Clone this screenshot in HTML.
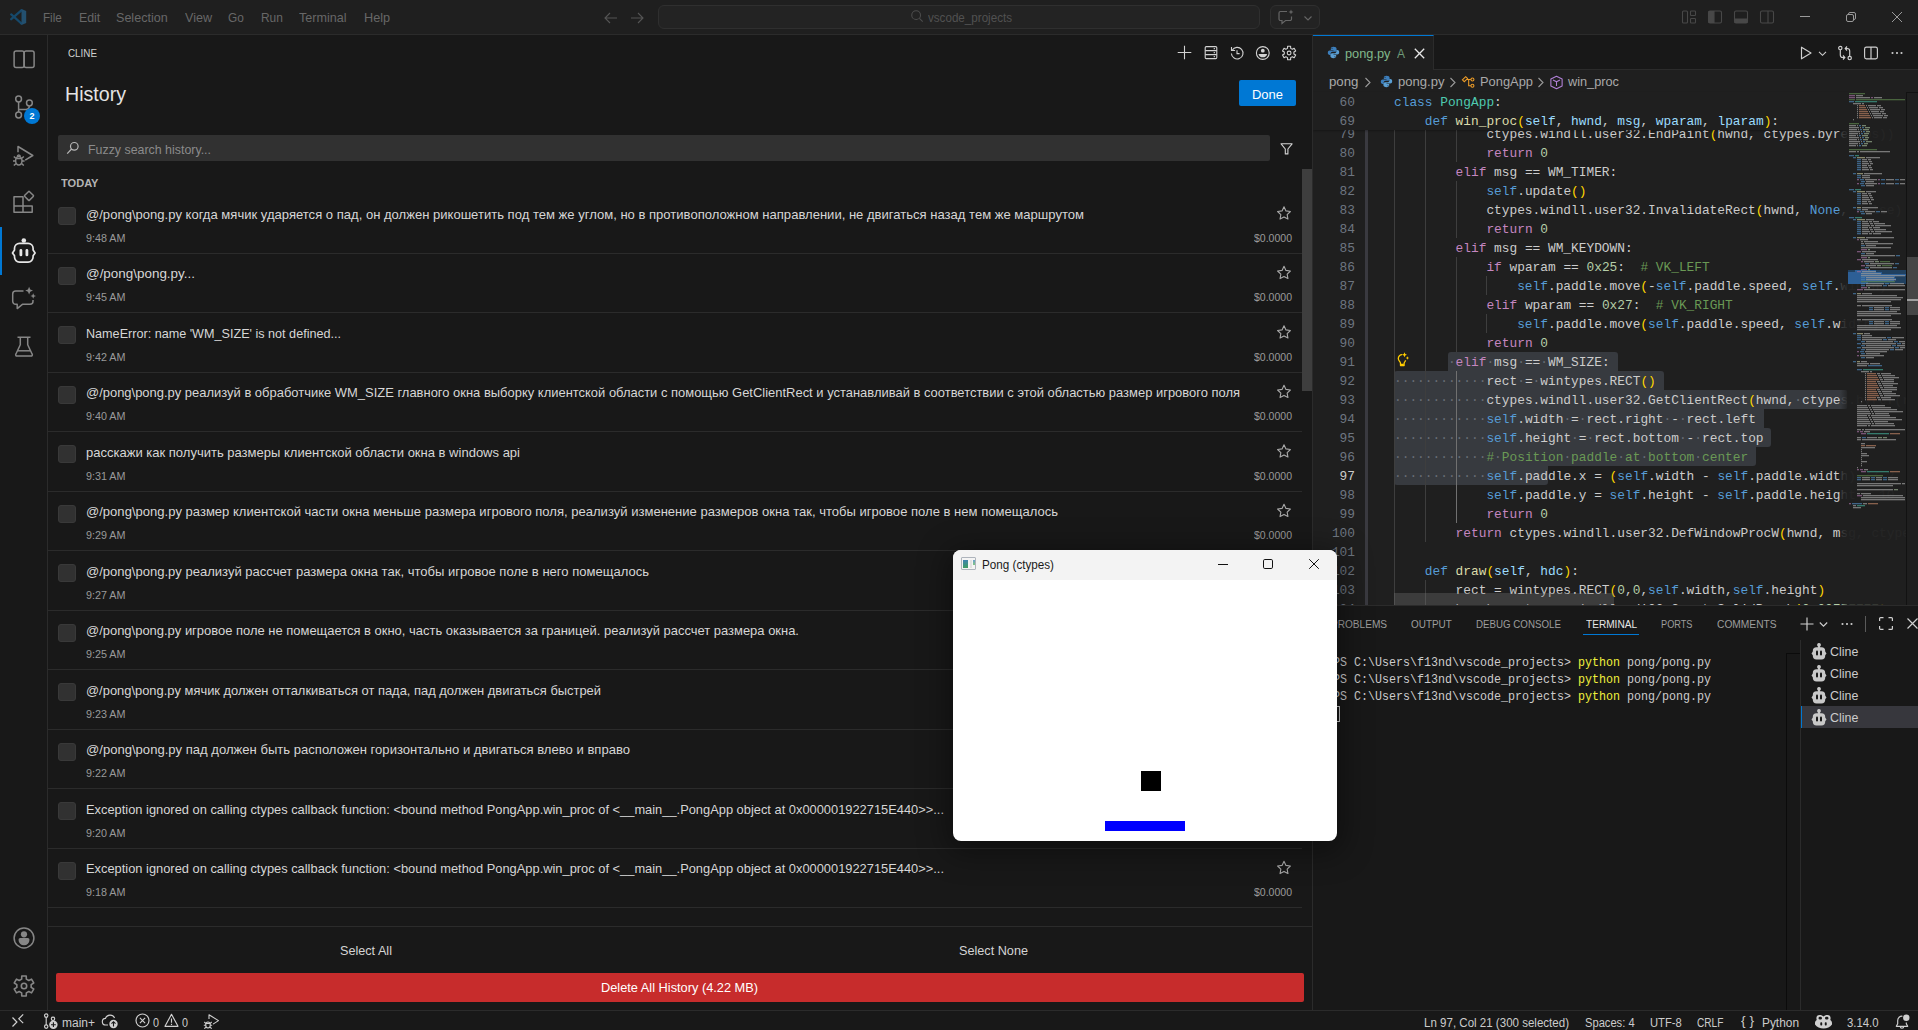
<!DOCTYPE html>
<html>
<head>
<meta charset="utf-8">
<title>pong.py - vscode_projects</title>
<style>
*{box-sizing:border-box;margin:0;padding:0}
html,body{width:1918px;height:1030px;overflow:hidden;background:#181818}
body{font-family:"Liberation Sans",sans-serif;font-size:13px;color:#cccccc;position:relative}
.abs{position:absolute}
svg{display:block;overflow:visible;position:absolute}
.fx{display:inline-block;transform-origin:0 50%;white-space:pre}

/* ---------- title bar ---------- */
#titlebar{left:0;top:0;width:1918px;height:35px;background:#1f1f1f;border-bottom:1px solid #2b2b2b}
.menu{top:1px;height:34px;line-height:34px;font-size:13px;color:#676767;white-space:nowrap}
#cmdcenter{left:658px;top:5px;width:602px;height:24px;border:1px solid #2f2f2f;border-radius:6px;background:#232323}
#cmdtxt{top:.700px;height:22px;line-height:22px;color:#515151;font-size:12px;white-space:nowrap}
#chatbox{left:1270px;top:5px;width:50px;height:24px;border:1px solid #2f2f2f;border-radius:6px;background:#232323}

/* ---------- activity bar ---------- */
#actbar{left:0;top:35px;width:48px;height:975px;background:#181818;border-right:1px solid #2b2b2b}

/* ---------- sidebar (Cline) ---------- */
#sidebar{left:48px;top:35px;width:1264px;height:975px;background:#181818;overflow:hidden}
.sep{left:0;width:1254px;height:1px;background:#2b2b2b}
.cb{left:10px;width:18px;height:18px;border-radius:3px;background:#313131;border:1px solid #393939}
.it{left:38px;font-size:13px;color:#d6d6d6;white-space:nowrap;height:18px;line-height:18px}
.tm{left:38px;font-size:11px;color:#9a9a9a;white-space:nowrap;height:14px;line-height:14px}
.pr{left:1206px;font-size:10.5px;color:#9a9a9a;white-space:nowrap;height:14px;line-height:14px}

/* ---------- editor ---------- */
#edborder{left:1312px;top:35px;width:1px;height:975px;background:#2b2b2b}
#editor{left:1313px;top:35px;width:605px;height:570px;background:#1f1f1f;overflow:hidden}
#tabs{left:0;top:0;width:605px;height:35px;background:#181818;border-bottom:1px solid #2b2b2b}
#tab{left:0;top:0;width:121px;height:35px;background:#1f1f1f;border-top:1px solid #0078d4;border-right:1px solid #2b2b2b}
.code{left:81px;font-family:"Liberation Mono",monospace;font-size:12.83px;white-space:pre;height:19px;line-height:19px;color:#cccccc}
.ln{left:0;width:42px;text-align:right;font-family:"Liberation Mono",monospace;font-size:12.83px;height:19px;line-height:19px;color:#6e7681;white-space:pre}
.k{color:#569cd6}.c{color:#c586c0}.f{color:#dcdcaa}.t{color:#4ec9b0}.v{color:#9cdcfe}.n{color:#b5cea8}.m{color:#6a9955}.p{color:#ffd700}.w{color:#cccccc}.d{color:#686d75}
.sel{background:#373a3f;height:19px}
.ig{width:1px;background:#3b3b3b}

/* ---------- panel ---------- */
#panel{left:1313px;top:605px;width:605px;height:405px;background:#181818;border-top:1px solid #2b2b2b;overflow:hidden}
.ptab{top:8.100px;height:20px;line-height:20px;font-size:11px;color:#9d9d9d;white-space:nowrap}
.term{font-family:"Liberation Mono",monospace;font-size:12.83px;white-space:pre;height:17px;line-height:17px;color:#cccccc}
.y{color:#f0f03c}

/* ---------- status bar ---------- */
#status{left:0;top:1010px;width:1918px;height:22px;background:#181818;border-top:1px solid #2b2b2b;font-size:12px;color:#cccccc}
.st{top:1.800px;height:21px;line-height:21px;white-space:nowrap;font-size:12px;color:#cccccc}

/* ---------- pong window ---------- */
#pong{left:953px;top:550px;width:384.200px;height:291px;background:#ffffff;border-radius:8px;overflow:hidden;box-shadow:0 6px 30px 6px rgba(0,0,0,.38)}
#pongtitle{left:0;top:0;width:100%;height:29.500px;background:#f3f3f3}
</style>
</head>
<body>

<!-- ================= TITLE BAR ================= -->
<div id="titlebar" class="abs">
  <!-- vscode logo (abs x 10-26.2, y 9-25) -->
  <svg style="left:9px;top:8px" width="19" height="18" viewBox="0 0 19 18"><g fill="none" stroke="#16496b" stroke-width="2.300" stroke-linecap="round"><path d="M12.400 2.300 2.200 11.200"/><path d="M2.200 6.400 12.400 15.500"/></g><path fill="#23506f" d="M12.500.900 17.200 3v11.900L12.500 17z"/><path fill="#1b4d70" d="M12.500.900 10.800 2.400l1.700 1.600zM12.500 17l-1.700-1.500 1.700-1.600z"/></svg>
  <div class="abs menu" style="left:43.4px"><span class="fx" style="transform:scaleX(0.8972)">File</span></div>
  <div class="abs menu" style="left:78.8px"><span class="fx" style="transform:scaleX(0.9506)">Edit</span></div>
  <div class="abs menu" style="left:116.4px"><span class="fx" style="transform:scaleX(0.9666)">Selection</span></div>
  <div class="abs menu" style="left:184.8px"><span class="fx" style="transform:scaleX(0.9695)">View</span></div>
  <div class="abs menu" style="left:228.2px"><span class="fx" style="transform:scaleX(0.9110)">Go</span></div>
  <div class="abs menu" style="left:260.7px"><span class="fx" style="transform:scaleX(0.9179)">Run</span></div>
  <div class="abs menu" style="left:299.3px"><span class="fx" style="transform:scaleX(0.9669)">Terminal</span></div>
  <div class="abs menu" style="left:363.5px"><span class="fx" style="transform:scaleX(0.9757)">Help</span></div>
  <!-- nav arrows -->
  <svg style="left:603px;top:10px" width="16" height="16" viewBox="0 0 16 16" fill="none" stroke="#555555" stroke-width="1.1"><path d="M14 8H2.5M7 3 2 8l5 5"/></svg>
  <svg style="left:629px;top:10px" width="16" height="16" viewBox="0 0 16 16" fill="none" stroke="#555555" stroke-width="1.1"><path d="M2 8h11.5M9 3l5 5-5 5"/></svg>
  <div id="cmdcenter" class="abs">
    <svg style="left:251px;top:3px" width="14" height="14" viewBox="0 0 16 16" fill="none" stroke="#4d4d4d" stroke-width="1.2"><circle cx="7" cy="7" r="5"/><path d="M10.8 10.8 14.5 14.5"/></svg>
    <div id="cmdtxt" class="abs" style="left:269px"><span class="fx" style="transform:scaleX(0.9686)">vscode_projects</span></div>
  </div>
  <div id="chatbox" class="abs">
    <svg style="left:6px;top:2px" width="18" height="18" viewBox="0 0 18 18" fill="none" stroke="#666666" stroke-width="1.2"><path d="M10 3.5H3.5a1.5 1.5 0 0 0-1.500 1.500v6a1.500 1.500 0 0 0 1.500 1.500H5v3l3.500-3H13a1.500 1.500 0 0 0 1.500-1.500V8.500"/><path d="M14 1.500l.7 1.800 1.800.7-1.800.7-.7 1.800-.7-1.800-1.800-.7 1.800-.7z" fill="#666666" stroke="none"/></svg>
    <svg style="left:32px;top:7px" width="10" height="10" viewBox="0 0 10 10" fill="none" stroke="#666666" stroke-width="1.1"><path d="M1.500 3.500 5 7l3.500-3.500"/></svg>
  </div>
  <!-- layout controls -->
  <svg style="left:1681px;top:9px" width="16" height="16" viewBox="0 0 16 16" fill="none" stroke="#484848" stroke-width="1.1"><rect x="1.500" y="2" width="5" height="12" rx="1"/><rect x="9.500" y="2" width="5" height="4.500" rx=".800"/><rect x="9.500" y="9.500" width="5" height="4.500" rx=".800"/></svg>
  <svg style="left:1707px;top:9px" width="16" height="16" viewBox="0 0 16 16" fill="none" stroke="#484848" stroke-width="1.1"><rect x="1.500" y="2" width="13" height="12" rx="1.500"/><path d="M2 2.500h5v11H2z" fill="#484848"/></svg>
  <svg style="left:1733px;top:9px" width="16" height="16" viewBox="0 0 16 16" fill="none" stroke="#484848" stroke-width="1.1"><rect x="1.500" y="2" width="13" height="12" rx="1.500"/><path d="M2 10h12v3.500H2z" fill="#484848"/></svg>
  <svg style="left:1759px;top:9px" width="16" height="16" viewBox="0 0 16 16" fill="none" stroke="#484848" stroke-width="1.1"><rect x="1.500" y="2" width="13" height="12" rx="1.500"/><path d="M9 2v12"/></svg>
  <!-- window controls -->
  <svg style="left:1800px;top:12px" width="10" height="10" viewBox="0 0 10 10" fill="none" stroke="#9a9a9a" stroke-width="1"><path d="M0 4.500h10"/></svg>
  <svg style="left:1846px;top:12px" width="10" height="10" viewBox="0 0 10 10" fill="none" stroke="#9a9a9a" stroke-width="1"><rect x=".5" y="2.500" width="7" height="7" rx="1.500"/><path d="M2.500 2.500V2A1.500 1.500 0 0 1 4 .5h4A1.500 1.500 0 0 1 9.500 2v4A1.500 1.500 0 0 1 8 7.500h-.5"/></svg>
  <svg style="left:1892px;top:12px" width="10" height="10" viewBox="0 0 10 10" fill="none" stroke="#9a9a9a" stroke-width="1"><path d="M0 0l10 10M10 0 0 10"/></svg>
</div>

<!-- ================= ACTIVITY BAR ================= -->
<div id="actbar" class="abs">
  <!-- 1: two-pane book icon  (center y=59 abs => 24 rel) -->
  <svg style="left:12px;top:12px" width="24" height="24" viewBox="0 0 24 24" fill="none" stroke="#868686" stroke-width="1.5"><rect x="2.100" y="3.900" width="10" height="16.700" rx="2"/><rect x="12.100" y="3.900" width="10" height="16.700" rx="2"/></svg>
  <!-- 2: source control -->
  <svg style="left:12px;top:60px" width="24" height="24" viewBox="0 0 24 24" fill="none" stroke="#868686" stroke-width="1.500"><circle cx="6.600" cy="4" r="2.900"/><circle cx="17.400" cy="8" r="2.900"/><circle cx="6.600" cy="20" r="2.900"/><path d="M6.600 6.900v10.200M17.400 10.900c0 3.300-2.400 3.700-5.400 3.700H6.600"/></svg>
  <div class="abs" style="left:24px;top:72.500px;width:16px;height:16px;border-radius:8px;background:#0078d4;color:#fff;font-size:9px;font-weight:bold;line-height:16px;text-align:center">2</div>
  <!-- 3: run and debug (center y=156 => 121) -->
  <svg style="left:12px;top:109px" width="24" height="24" viewBox="0 0 24 24" fill="none" stroke="#868686" stroke-width="1.5" stroke-linejoin="round"><path d="M6 8.300V2.500l14.800 9-7.600 4.700"/><ellipse cx="6.800" cy="16.800" rx="3.200" ry="4.200"/><path d="M3.800 14.500h6M1 17h2.600M10 17h2.600M1.800 12.500l2 1.800M11.800 12.500l-2 1.800M1.800 21.500l2.200-1.800M11.800 21.500 9.600 19.700M5.300 12.800c0-1.200.6-1.800 1.500-1.800s1.500.6 1.500 1.800"/></svg>
  <!-- 4: extensions (abs x 13.2-33, y 194-213) -->
  <svg style="left:12px;top:156px" width="24" height="24" viewBox="0 0 24 24" fill="none" stroke="#868686" stroke-width="1.500" stroke-linejoin="round"><path d="M2 5.700h9v9.200h9.200v6.300H2z"/><path d="M2 14.900h9v6.300"/><rect x="13.600" y="1.500" width="6.800" height="6.800" rx=".800" transform="rotate(45 17 4.900)"/></svg>
  <!-- active indicator -->
  <div class="abs" style="left:0;top:192px;width:2px;height:48px;background:#0078d4"></div>
  <!-- 5: Cline robot (abs 238..263) -->
  <svg style="left:12px;top:203px" width="24" height="25" viewBox="0 0 24 25" fill="none" stroke="#e6e6e6" stroke-width="1.700" stroke-linejoin="round"><circle cx="11.800" cy="2.500" r="2.300" fill="#e6e6e6" stroke="none"/><path d="M7.500 5.300h8.600a5 5 0 0 1 5 5v1.700l2 2.900-2 2.900v1.300a5 5 0 0 1-5 5H7.500a5 5 0 0 1-5-5v-1.300l-2-2.900 2-2.900v-1.700a5 5 0 0 1 5-5z"/><rect x="7.500" y="11" width="2.800" height="7.300" rx="1.400" fill="#e6e6e6" stroke="none"/><rect x="13.500" y="11" width="2.800" height="7.300" rx="1.400" fill="#e6e6e6" stroke="none"/></svg>
  <!-- 6: chat sparkle (bubble abs x 12..33, y 290..309) -->
  <svg style="left:12px;top:251px" width="24" height="24" viewBox="0 0 24 24" fill="none" stroke="#868686" stroke-width="1.500" stroke-linejoin="round"><path d="M11.500 4.900H3.700a3 3 0 0 0-3 3v7.400a3 3 0 0 0 3 3h1.500v4.300l5.200-4.300h7.600a3 3 0 0 0 3-3V14"/><path d="M17.100.700l1.150 2.750 2.750 1.150-2.750 1.150-1.150 2.750-1.150-2.750-2.750-1.150 2.750-1.150z" fill="#868686" stroke="none"/><path d="M21.200 7.200l.85 1.950 1.950.850-1.950.850-.85 1.950-.85-1.950-1.950-.850 1.950-.850z" fill="#868686" stroke="none"/></svg>
  <!-- 7: flask (abs y 337..357) -->
  <svg style="left:12px;top:299px" width="24" height="24" viewBox="0 0 24 24" fill="none" stroke="#868686" stroke-width="1.500" stroke-linejoin="round"><path d="M5.500 3.300h13M8.300 3.300v7.500L3.800 20.200a1.300 1.300 0 0 0 1.200 1.900h14a1.300 1.300 0 0 0 1.200-1.900L15.700 10.800V3.300"/><path d="M5.600 16.800h12.800"/></svg>
  <!-- accounts (center abs 24,938) -->
  <svg style="left:12px;top:891px" width="24" height="24" viewBox="0 0 24 24" fill="none" stroke="#868686" stroke-width="1.500"><circle cx="12" cy="12" r="9.900"/><circle cx="12" cy="8.300" r="3.100" fill="#868686" stroke="none"/><path d="M8.200 12.100h7.600a1.700 1.700 0 0 1 1.700 1.700 5.500 5.500 0 0 1-11 0 1.700 1.700 0 0 1 1.700-1.700z" fill="#868686" stroke="none"/></svg>
  <!-- manage gear (center abs 24,986) -->
  <svg style="left:12px;top:939px" width="24" height="24" viewBox="0 0 24 24" fill="none" stroke="#868686" stroke-width="1.600" stroke-linejoin="round"><circle cx="12" cy="12" r="2.700"/><path d="M9.67 5.08 L9.77 2.05 L14.23 2.05 L14.33 5.08 L16.83 6.52 L19.51 5.10 L21.73 8.95 L19.16 10.56 L19.16 13.44 L21.73 15.05 L19.51 18.90 L16.83 17.48 L14.33 18.92 L14.23 21.95 L9.77 21.95 L9.67 18.92 L7.17 17.48 L4.49 18.90 L2.27 15.05 L4.84 13.44 L4.84 10.56 L2.27 8.95 L4.49 5.10 L7.17 6.52z"/></svg>
</div>

<!-- ================= SIDEBAR (Cline history) ================= -->
<div id="sidebar" class="abs">
  <div class="abs" style="left:20px;top:9px;height:18px;line-height:18px;font-size:11px;color:#d0d0d0;white-space:nowrap"><span class="fx" style="transform:scaleX(0.8949)">CLINE</span></div>
  <svg style="left:1128px;top:9px" width="17" height="17" viewBox="0 0 17 17" fill="none" stroke="#d2d2d2" stroke-width="1.100"><g transform="translate(0.5 0.5)"><path d="M8 1.200v13.600M1.200 8h13.600"/></g></svg>
  <svg style="left:1155px;top:9px" width="17" height="17" viewBox="0 0 17 17" fill="none" stroke="#d2d2d2" stroke-width="1.100"><g transform="translate(0 0.5)"><rect x="2.200" y="2.100" width="11.600" height="12" rx="1.100"/><path d="M2.200 6.100h11.600M2.200 10.100h11.600"/><path d="M10.700 4.100h1.200M10.700 8.100h1.200M10.700 12.100h1.200" stroke-width="1.300"/></g></svg>
  <svg style="left:1181px;top:10px" width="17" height="17" viewBox="0 0 17 17" fill="none" stroke="#d2d2d2" stroke-width="1.100"><g transform="translate(0.2 0)"><path d="M3 5.200A5.800 5.800 0 1 1 2.200 8.500"/><path d="M2.300 1.900v3.600h3.600"/><path d="M7.800 5.200v3.400h2.600"/></g></svg>
  <svg style="left:1206px;top:10px" width="17" height="17" viewBox="0 0 17 17" fill="none" stroke="#d2d2d2" stroke-width="1.100"><g transform="translate(0.8 0)"><circle cx="8" cy="8" r="6.400"/><circle cx="8" cy="5.700" r="1.900" fill="#d2d2d2" stroke="none"/><path d="M3.700 8.900h8.600a4.400 4.400 0 0 1-8.600 0z" fill="#d2d2d2" stroke="none"/></g></svg>
  <svg style="left:1233px;top:10px" width="17" height="17" viewBox="0 0 17 17" fill="none" stroke="#d2d2d2" stroke-width="1.100"><g transform="translate(0.1 0)"><circle cx="8" cy="8" r="1.900"/><path d="M6.44 3.36 L6.49 1.27 L9.51 1.27 L9.56 3.36 L11.24 4.32 L13.08 3.33 L14.58 5.94 L12.80 7.03 L12.80 8.97 L14.58 10.06 L13.08 12.67 L11.24 11.68 L9.56 12.64 L9.51 14.73 L6.49 14.73 L6.44 12.64 L4.76 11.68 L2.92 12.67 L1.42 10.06 L3.20 8.97 L3.20 7.03 L1.42 5.94 L2.92 3.33 L4.76 4.32z" stroke-linejoin="round"/></g></svg>
  <div class="abs" style="left:16.500px;top:45px;height:28px;line-height:28px;font-size:20px;color:#e4e4e4;white-space:nowrap"><span class="fx" style="transform:scaleX(0.9802)">History</span></div>
  <div class="abs" style="left:1191px;top:45px;width:57px;height:26px;background:#0078d4;border-radius:2px"><div class="abs" style="left:13px;top:.700px;height:26px;line-height:27px;color:#fff;font-size:13px;white-space:nowrap"><span class="fx" style="transform:scaleX(0.9975)">Done</span></div></div>
  <div class="abs" style="left:10px;top:100px;width:1212px;height:26px;background:#313131;border-radius:2px">
    <svg style="left:8px;top:6px" width="14" height="14" viewBox="0 0 14 14" fill="none" stroke="#b8b8b8" stroke-width="1.200"><circle cx="8.300" cy="5.300" r="3.800"/><path d="M5.600 8 1.200 12.600"/></svg>
    <div class="abs" style="left:30px;top:1.700px;height:26px;line-height:26px;font-size:13px;color:#8b8b8b;white-space:nowrap"><span class="fx" style="transform:scaleX(0.9529)">Fuzzy search history...</span></div>
  </div>
  <svg style="left:1230px;top:105px" width="17" height="17" viewBox="0 0 17 17" fill="none" stroke="#d2d2d2" stroke-width="1.100"><g transform="translate(0.6 0.8)"><path d="M2.500 3h11L9.300 8.200v4.900H6.700V8.200z" stroke-linejoin="round"/></g></svg>
  <div class="abs" style="left:13px;top:140px;height:16px;line-height:16px;font-size:11px;font-weight:bold;color:#b4b4b4;white-space:nowrap"><span class="fx" style="transform:scaleX(1.0054)">TODAY</span></div>
  <div class="abs" style="left:1254px;top:134px;width:10px;height:222px;background:#3e3e3e"></div>
  <div class="abs cb" style="top:172.4px"></div>
  <div class="abs it" style="top:170.9px"><span class="fx" style="transform:scaleX(1.0037)">@/pong\pong.py когда мячик ударяется о пад, он должен рикошетить под тем же углом, но в противоположном направлении, не двигаться назад тем же маршрутом</span></div>
  <div class="abs tm" style="top:195.9px"><span class="fx" style="transform:scaleX(0.9787)">9:48 AM</span></div>
  <svg style="left:1228px;top:170px" width="17" height="17" viewBox="0 0 17 17" fill="none" stroke="#a9a9a9" stroke-width="1.100"><g transform="translate(0 0.2)"><path d="M8 1.600l1.950 4.100 4.450.6-3.250 3.100.8 4.450L8 11.700l-3.950 2.150.8-4.450L1.600 6.300l4.450-.6z" stroke-linejoin="round"/></g></svg>
  <div class="abs pr" style="top:195.9px"><span class="fx" style="transform:scaleX(1.0008)">$0.0000</span></div>
  <div class="abs sep" style="top:217.9px"></div>
  <div class="abs cb" style="top:231.9px"></div>
  <div class="abs it" style="top:230.4px"><span class="fx" style="transform:scaleX(1.0333)">@/pong\pong.py...</span></div>
  <div class="abs tm" style="top:255.4px"><span class="fx" style="transform:scaleX(0.9787)">9:45 AM</span></div>
  <svg style="left:1228px;top:229px" width="17" height="17" viewBox="0 0 17 17" fill="none" stroke="#a9a9a9" stroke-width="1.100"><g transform="translate(0 0.7)"><path d="M8 1.600l1.950 4.100 4.450.6-3.250 3.100.8 4.450L8 11.700l-3.950 2.150.8-4.450L1.600 6.300l4.450-.6z" stroke-linejoin="round"/></g></svg>
  <div class="abs pr" style="top:255.4px"><span class="fx" style="transform:scaleX(1.0008)">$0.0000</span></div>
  <div class="abs sep" style="top:277.4px"></div>
  <div class="abs cb" style="top:291.4px"></div>
  <div class="abs it" style="top:289.9px"><span class="fx" style="transform:scaleX(0.9700)">NameError: name 'WM_SIZE' is not defined...</span></div>
  <div class="abs tm" style="top:314.9px"><span class="fx" style="transform:scaleX(0.9787)">9:42 AM</span></div>
  <svg style="left:1228px;top:289px" width="17" height="17" viewBox="0 0 17 17" fill="none" stroke="#a9a9a9" stroke-width="1.100"><g transform="translate(0 0.2)"><path d="M8 1.600l1.950 4.100 4.450.6-3.250 3.100.8 4.450L8 11.700l-3.950 2.150.8-4.450L1.600 6.300l4.450-.6z" stroke-linejoin="round"/></g></svg>
  <div class="abs pr" style="top:314.9px"><span class="fx" style="transform:scaleX(1.0008)">$0.0000</span></div>
  <div class="abs sep" style="top:336.9px"></div>
  <div class="abs cb" style="top:350.9px"></div>
  <div class="abs it" style="top:349.4px"><span class="fx" style="transform:scaleX(0.9965)">@/pong\pong.py реализуй в обработчике WM_SIZE главного окна выборку клиентской области с помощью GetClientRect и устанавливай в соответствии с этой областью размер игрового поля</span></div>
  <div class="abs tm" style="top:374.4px"><span class="fx" style="transform:scaleX(0.9787)">9:40 AM</span></div>
  <svg style="left:1228px;top:348px" width="17" height="17" viewBox="0 0 17 17" fill="none" stroke="#a9a9a9" stroke-width="1.100"><g transform="translate(0 0.7)"><path d="M8 1.600l1.950 4.100 4.450.6-3.250 3.100.8 4.450L8 11.700l-3.950 2.150.8-4.450L1.600 6.300l4.450-.6z" stroke-linejoin="round"/></g></svg>
  <div class="abs pr" style="top:374.4px"><span class="fx" style="transform:scaleX(1.0008)">$0.0000</span></div>
  <div class="abs sep" style="top:396.4px"></div>
  <div class="abs cb" style="top:410.4px"></div>
  <div class="abs it" style="top:408.9px"><span class="fx" style="transform:scaleX(1.0008)">расскажи как получить размеры клиентской области окна в windows api</span></div>
  <div class="abs tm" style="top:433.9px"><span class="fx" style="transform:scaleX(0.9787)">9:31 AM</span></div>
  <svg style="left:1228px;top:408px" width="17" height="17" viewBox="0 0 17 17" fill="none" stroke="#a9a9a9" stroke-width="1.100"><g transform="translate(0 0.2)"><path d="M8 1.600l1.950 4.100 4.450.6-3.250 3.100.8 4.450L8 11.700l-3.950 2.150.8-4.450L1.600 6.300l4.450-.6z" stroke-linejoin="round"/></g></svg>
  <div class="abs pr" style="top:433.9px"><span class="fx" style="transform:scaleX(1.0008)">$0.0000</span></div>
  <div class="abs sep" style="top:455.9px"></div>
  <div class="abs cb" style="top:469.9px"></div>
  <div class="abs it" style="top:468.4px"><span class="fx" style="transform:scaleX(1.0034)">@/pong\pong.py размер клиентской части окна меньше размера игрового поля, реализуй изменение размеров окна так, чтобы игровое поле в нем помещалось</span></div>
  <div class="abs tm" style="top:493.4px"><span class="fx" style="transform:scaleX(0.9787)">9:29 AM</span></div>
  <svg style="left:1228px;top:467px" width="17" height="17" viewBox="0 0 17 17" fill="none" stroke="#a9a9a9" stroke-width="1.100"><g transform="translate(0 0.7)"><path d="M8 1.600l1.950 4.100 4.450.6-3.250 3.100.8 4.450L8 11.700l-3.950 2.150.8-4.450L1.600 6.300l4.450-.6z" stroke-linejoin="round"/></g></svg>
  <div class="abs pr" style="top:493.4px"><span class="fx" style="transform:scaleX(1.0008)">$0.0000</span></div>
  <div class="abs sep" style="top:515.4px"></div>
  <div class="abs cb" style="top:529.4px"></div>
  <div class="abs it" style="top:527.9px"><span class="fx" style="transform:scaleX(1.0026)">@/pong\pong.py реализуй рассчет размера окна так, чтобы игровое поле в него помещалось</span></div>
  <div class="abs tm" style="top:552.9px"><span class="fx" style="transform:scaleX(0.9787)">9:27 AM</span></div>
  <svg style="left:1228px;top:527px" width="17" height="17" viewBox="0 0 17 17" fill="none" stroke="#a9a9a9" stroke-width="1.100"><g transform="translate(0 0.2)"><path d="M8 1.600l1.950 4.100 4.450.6-3.250 3.100.8 4.450L8 11.700l-3.950 2.150.8-4.450L1.600 6.300l4.450-.6z" stroke-linejoin="round"/></g></svg>
  <div class="abs pr" style="top:552.9px"><span class="fx" style="transform:scaleX(1.0008)">$0.0000</span></div>
  <div class="abs sep" style="top:574.9px"></div>
  <div class="abs cb" style="top:588.9px"></div>
  <div class="abs it" style="top:587.4px"><span class="fx" style="transform:scaleX(0.9966)">@/pong\pong.py игровое поле не помещается в окно, часть оказывается за границей. реализуй рассчет размера окна.</span></div>
  <div class="abs tm" style="top:612.4px"><span class="fx" style="transform:scaleX(0.9787)">9:25 AM</span></div>
  <svg style="left:1228px;top:586px" width="17" height="17" viewBox="0 0 17 17" fill="none" stroke="#a9a9a9" stroke-width="1.100"><g transform="translate(0 0.7)"><path d="M8 1.600l1.950 4.100 4.450.6-3.250 3.100.8 4.450L8 11.700l-3.950 2.150.8-4.450L1.600 6.300l4.450-.6z" stroke-linejoin="round"/></g></svg>
  <div class="abs pr" style="top:612.4px"><span class="fx" style="transform:scaleX(1.0008)">$0.0000</span></div>
  <div class="abs sep" style="top:634.4px"></div>
  <div class="abs cb" style="top:648.4px"></div>
  <div class="abs it" style="top:646.9px"><span class="fx" style="transform:scaleX(0.9932)">@/pong\pong.py мячик должен отталкиваться от пада, пад должен двигаться быстрей</span></div>
  <div class="abs tm" style="top:671.9px"><span class="fx" style="transform:scaleX(0.9787)">9:23 AM</span></div>
  <svg style="left:1228px;top:646px" width="17" height="17" viewBox="0 0 17 17" fill="none" stroke="#a9a9a9" stroke-width="1.100"><g transform="translate(0 0.2)"><path d="M8 1.600l1.950 4.100 4.450.6-3.250 3.100.8 4.450L8 11.700l-3.950 2.150.8-4.450L1.600 6.300l4.450-.6z" stroke-linejoin="round"/></g></svg>
  <div class="abs pr" style="top:671.9px"><span class="fx" style="transform:scaleX(1.0008)">$0.0000</span></div>
  <div class="abs sep" style="top:693.9px"></div>
  <div class="abs cb" style="top:707.9px"></div>
  <div class="abs it" style="top:706.4px"><span class="fx" style="transform:scaleX(1.0053)">@/pong\pong.py пад должен быть расположен горизонтально и двигаться влево и вправо</span></div>
  <div class="abs tm" style="top:731.4px"><span class="fx" style="transform:scaleX(0.9787)">9:22 AM</span></div>
  <svg style="left:1228px;top:705px" width="17" height="17" viewBox="0 0 17 17" fill="none" stroke="#a9a9a9" stroke-width="1.100"><g transform="translate(0 0.7)"><path d="M8 1.600l1.950 4.100 4.450.6-3.250 3.100.8 4.450L8 11.700l-3.950 2.150.8-4.450L1.600 6.300l4.450-.6z" stroke-linejoin="round"/></g></svg>
  <div class="abs pr" style="top:731.4px"><span class="fx" style="transform:scaleX(1.0008)">$0.0000</span></div>
  <div class="abs sep" style="top:753.4px"></div>
  <div class="abs cb" style="top:767.4px"></div>
  <div class="abs it" style="top:765.9px"><span class="fx" style="transform:scaleX(0.9893)">Exception ignored on calling ctypes callback function: &lt;bound method PongApp.win_proc of &lt;__main__.PongApp object at 0x000001922715E440&gt;&gt;...</span></div>
  <div class="abs tm" style="top:790.9px"><span class="fx" style="transform:scaleX(0.9787)">9:20 AM</span></div>
  <svg style="left:1228px;top:765px" width="17" height="17" viewBox="0 0 17 17" fill="none" stroke="#a9a9a9" stroke-width="1.100"><g transform="translate(0 0.2)"><path d="M8 1.600l1.950 4.100 4.450.6-3.250 3.100.8 4.450L8 11.700l-3.950 2.150.8-4.450L1.600 6.300l4.450-.6z" stroke-linejoin="round"/></g></svg>
  <div class="abs pr" style="top:790.9px"><span class="fx" style="transform:scaleX(1.0008)">$0.0000</span></div>
  <div class="abs sep" style="top:812.9px"></div>
  <div class="abs cb" style="top:826.9px"></div>
  <div class="abs it" style="top:825.4px"><span class="fx" style="transform:scaleX(0.9893)">Exception ignored on calling ctypes callback function: &lt;bound method PongApp.win_proc of &lt;__main__.PongApp object at 0x000001922715E440&gt;&gt;...</span></div>
  <div class="abs tm" style="top:850.4px"><span class="fx" style="transform:scaleX(0.9787)">9:18 AM</span></div>
  <svg style="left:1228px;top:824px" width="17" height="17" viewBox="0 0 17 17" fill="none" stroke="#a9a9a9" stroke-width="1.100"><g transform="translate(0 0.7)"><path d="M8 1.600l1.950 4.100 4.450.6-3.250 3.100.8 4.450L8 11.700l-3.950 2.150.8-4.450L1.600 6.300l4.450-.6z" stroke-linejoin="round"/></g></svg>
  <div class="abs pr" style="top:850.4px"><span class="fx" style="transform:scaleX(1.0008)">$0.0000</span></div>
  <div class="abs sep" style="top:872.4px"></div>
  <div class="abs" style="left:0;top:891px;width:1264px;height:84px;background:#181818;border-top:1px solid #2b2b2b">
    <div class="abs" style="left:292px;top:14.800px;height:18px;line-height:18px;font-size:13px;color:#d4d4d4;white-space:nowrap"><span class="fx" style="transform:scaleX(0.9722)">Select All</span></div>
    <div class="abs" style="left:911.400px;top:14.800px;height:18px;line-height:18px;font-size:13px;color:#d4d4d4;white-space:nowrap"><span class="fx" style="transform:scaleX(0.9742)">Select None</span></div>
    <div class="abs" style="left:8px;top:46px;width:1248px;height:29px;background:#c72c2c;border-radius:2px"><div class="abs" style="left:545px;top:0;height:29px;line-height:30px;color:#fff;font-size:13px;white-space:nowrap"><span class="fx" style="transform:scaleX(0.9833)">Delete All History (4.22 MB)</span></div></div>
  </div>
</div>

<!-- ================= EDITOR ================= -->
<div id="edborder" class="abs"></div>
<div id="editor" class="abs">
  <div id="tabs" class="abs"><div id="tab" class="abs">
    <svg style="left:13.500px;top:10px" width="13" height="13" viewBox="0 0 16 16"><path fill="#3c7ebb" d="M7.900 1C5.600 1 4.700 2 4.700 3.300V5H8v.600H3.300C2 5.600 1 6.700 1 8.400c0 1.700.900 2.700 2.200 2.700h1.300V9.300c0-1.300 1.100-2.300 2.400-2.300h3c1 0 1.900-.900 1.900-1.900V3.300C11.800 2 10.600 1 7.900 1zM6.200 2.100a.600.600 0 1 1 0 1.300.600.600 0 0 1 0-1.300z"/><path fill="#5a9fd4" d="M8.100 15c2.300 0 3.200-1 3.200-2.300V11H8v-.600h4.700c1.300 0 2.300-1.100 2.300-2.800 0-1.700-.900-2.700-2.200-2.700h-1.300v1.800c0 1.300-1.100 2.300-2.400 2.300h-3c-1 0-1.900.900-1.900 1.900v1.800C4.200 14 5.400 15 8.100 15zm1.700-1.100a.600.600 0 1 1 0-1.300.600.600 0 0 1 0 1.300z"/></svg>
    <div class="abs" style="left:32.400px;top:0;height:34px;line-height:35px;font-size:13px;color:#81b88b;white-space:nowrap"><span class="fx" style="transform:scaleX(0.9835)">pong.py</span></div>
    <div class="abs" style="left:84px;top:0;height:34px;line-height:35px;font-size:13px;color:#6f9a78;white-space:nowrap"><span class="fx" style="transform:scaleX(0.9225)">A</span></div>
    <svg style="left:100.500px;top:12px" width="11" height="11" viewBox="0 0 11 11" fill="none" stroke="#e8e8e8" stroke-width="1.300"><path d="M.800.800l9.400 9.400M10.200.800.800 10.200"/></svg>
  </div>
    <svg style="left:485px;top:9.500px" width="16" height="16" viewBox="0 0 16 16" fill="none" stroke="#d0d0d0" stroke-width="1.150" stroke-linejoin="round"><path d="M3.500 2.200v11.600L13 8z"/></svg>
    <svg style="left:505px;top:13.500px" width="9" height="9" viewBox="0 0 9 9" fill="none" stroke="#d0d0d0" stroke-width="1.100"><path d="M1 2.800 4.500 6.300 8 2.800"/></svg>
    <svg style="left:524px;top:9.500px" width="16" height="16" viewBox="0 0 16 16" fill="none" stroke="#d0d0d0" stroke-width="1.150"><circle cx="3.300" cy="3" r="1.700"/><circle cx="12.700" cy="13" r="1.700"/><path d="M3.300 4.700V10a2.500 2.500 0 0 0 2.500 2.500h1.700M6 10.500l1.800 2-1.800 2M12.700 11.300V6a2.500 2.500 0 0 0-2.500-2.500H8.500M10 1.500l-1.800 2 1.800 2"/></svg>
    <svg style="left:550px;top:9.500px" width="16" height="16" viewBox="0 0 16 16" fill="none" stroke="#d0d0d0" stroke-width="1.150"><rect x="1.600" y="2.100" width="12.800" height="11.800" rx="1.800"/><path d="M8 2.100v11.800"/></svg>
    <svg style="left:576px;top:9.500px" width="16" height="16" viewBox="0 0 16 16" fill="#d0d0d0"><circle cx="3.500" cy="8" r="1.050"/><circle cx="8" cy="8" r="1.050"/><circle cx="12.500" cy="8" r="1.050"/></svg>
  </div>
  <div class="abs" style="left:16px;top:36px;height:22px;line-height:21px;font-size:13px;color:#a9a9a9;white-space:nowrap"><span class="fx" style="transform:scaleX(1.0200)">pong</span></div>
  <svg style="left:51px;top:41.500px" width="8" height="11" viewBox="0 0 8 11" fill="none" stroke="#9a9a9a" stroke-width="1.100"><path d="M1.500 1 6 5.500 1.500 10"/></svg>
  <svg style="left:66.5px;top:40px" width="13" height="13" viewBox="0 0 16 16"><path fill="#3c7ebb" d="M7.900 1C5.600 1 4.700 2 4.700 3.300V5H8v.600H3.300C2 5.600 1 6.700 1 8.400c0 1.700.900 2.700 2.200 2.700h1.300V9.300c0-1.300 1.100-2.300 2.400-2.300h3c1 0 1.900-.900 1.900-1.900V3.300C11.800 2 10.600 1 7.900 1zM6.200 2.100a.600.600 0 1 1 0 1.300.600.600 0 0 1 0-1.300z"/><path fill="#5a9fd4" d="M8.100 15c2.300 0 3.200-1 3.200-2.300V11H8v-.600h4.700c1.300 0 2.300-1.100 2.300-2.800 0-1.700-.900-2.700-2.200-2.700h-1.300v1.800c0 1.300-1.100 2.300-2.400 2.300h-3c-1 0-1.900.900-1.900 1.900v1.800C4.200 14 5.400 15 8.100 15zm1.700-1.100a.600.600 0 1 1 0-1.300.600.600 0 0 1 0 1.300z"/></svg>
  <div class="abs" style="left:84.5px;top:36px;height:22px;line-height:21px;font-size:13px;color:#a9a9a9;white-space:nowrap"><span class="fx" style="transform:scaleX(1.0051)">pong.py</span></div>
  <svg style="left:136.3px;top:41.500px" width="8" height="11" viewBox="0 0 8 11" fill="none" stroke="#9a9a9a" stroke-width="1.100"><path d="M1.500 1 6 5.500 1.500 10"/></svg>
  <svg style="left:148px;top:39.500px" width="15" height="15" viewBox="0 0 16 16" fill="none" stroke="#ee9d28" stroke-width="1.150"><path d="M1.500 5.200 5 1.800l2 2-3.500 3.400zM6 4.800h4.500M8.200 4.800v6.700h2.300"/><circle cx="12.200" cy="4.800" r="1.600"/><circle cx="12.200" cy="11.500" r="1.600"/></svg>
  <div class="abs" style="left:166.5px;top:36px;height:22px;line-height:21px;font-size:13px;color:#a9a9a9;white-space:nowrap"><span class="fx" style="transform:scaleX(0.9907)">PongApp</span></div>
  <svg style="left:224.3px;top:41.500px" width="8" height="11" viewBox="0 0 8 11" fill="none" stroke="#9a9a9a" stroke-width="1.100"><path d="M1.500 1 6 5.500 1.500 10"/></svg>
  <svg style="left:236px;top:39.500px" width="15" height="15" viewBox="0 0 16 16" fill="none" stroke="#b180d7" stroke-width="1.150" stroke-linejoin="round"><path d="M8 1.300 14 4.300v7.400L8 14.700 2 11.700V4.300z"/><path d="M4.300 5.400 8 7.300l3.700-1.900M8 7.300v4.400"/></svg>
  <div class="abs" style="left:254.5px;top:36px;height:22px;line-height:21px;font-size:13px;color:#a9a9a9;white-space:nowrap"><span class="fx" style="transform:scaleX(0.9802)">win_proc</span></div>
  <div class="abs sel" style="left:135px;top:316.5px;width:169.5px;border-radius:3px"></div>
  <div class="abs sel" style="left:81px;top:335.5px;width:269.5px;border-radius:3px"></div>
  <div class="abs sel" style="left:81px;top:354.5px;width:454px;border-radius:3px"></div>
  <div class="abs sel" style="left:81px;top:373.5px;width:370px;border-radius:3px"></div>
  <div class="abs sel" style="left:81px;top:392.5px;width:377.3px;border-radius:3px"></div>
  <div class="abs sel" style="left:81px;top:411.5px;width:362px;border-radius:3px"></div>
  <div class="abs sel" style="left:81px;top:430.5px;width:154px;border-radius:3px"></div>
  <div class="abs sel" style="left:135px;top:326.5px;width:169.5px;height:12px"></div>
  <div class="abs sel" style="left:81px;top:341.5px;width:154px;height:95px"></div>
  <div class="abs sel" style="left:81px;top:351.5px;width:269.5px;height:6px"></div>
  <div class="abs sel" style="left:81px;top:370.5px;width:370px;height:6px"></div>
  <div class="abs sel" style="left:81px;top:389.5px;width:370px;height:6px"></div>
  <div class="abs sel" style="left:81px;top:408.5px;width:362px;height:6px"></div>
  <div class="abs" style="left:52px;top:95px;width:3px;height:475px;background:#3a3a40"></div>
  <div class="abs ig" style="left:81px;top:88.5px;height:494px;background:#3e3e3e"></div>
  <div class="abs ig" style="left:111.8px;top:88.5px;height:418px;background:#3e3e3e"></div>
  <div class="abs ig" style="left:111.8px;top:544.5px;height:38px;background:#3e3e3e"></div>
  <div class="abs ig" style="left:142.6px;top:88.5px;height:38px;background:#3e3e3e"></div>
  <div class="abs ig" style="left:142.6px;top:145.5px;height:57px;background:#3e3e3e"></div>
  <div class="abs ig" style="left:142.6px;top:221.5px;height:95px;background:#3e3e3e"></div>
  <div class="abs ig" style="left:142.6px;top:335.5px;height:152px;background:#707070"></div>
  <div class="abs ig" style="left:173.4px;top:240.5px;height:19px;background:#3e3e3e"></div>
  <div class="abs ig" style="left:173.4px;top:278.5px;height:19px;background:#3e3e3e"></div>
  <div class="abs ln" style="top:89.8px;color:#6e7681">79</div>
  <div class="abs code" style="top:89.8px">            ctypes.windll.user32.EndPaint<span class="p">(</span>hwnd, ctypes.byr</div>
  <div class="abs code" style="top:89.8px;left:527.6px;opacity:.24">ef(ps))</div>
  <div class="abs ln" style="top:108.8px;color:#6e7681">80</div>
  <div class="abs code" style="top:108.8px">            <span class="c">return</span> <span class="n">0</span></div>
  <div class="abs ln" style="top:127.8px;color:#6e7681">81</div>
  <div class="abs code" style="top:127.8px">        <span class="c">elif</span> msg == WM_TIMER:</div>
  <div class="abs ln" style="top:146.8px;color:#6e7681">82</div>
  <div class="abs code" style="top:146.8px">            <span class="k">self</span>.update<span class="p">()</span></div>
  <div class="abs ln" style="top:165.8px;color:#6e7681">83</div>
  <div class="abs code" style="top:165.8px">            ctypes.windll.user32.InvalidateRect<span class="p">(</span>hwnd, <span class="k">None</span></div>
  <div class="abs code" style="top:165.8px;left:527.6px;opacity:.24">, False)</div>
  <div class="abs ln" style="top:184.8px;color:#6e7681">84</div>
  <div class="abs code" style="top:184.8px">            <span class="c">return</span> <span class="n">0</span></div>
  <div class="abs ln" style="top:203.8px;color:#6e7681">85</div>
  <div class="abs code" style="top:203.8px">        <span class="c">elif</span> msg == WM_KEYDOWN:</div>
  <div class="abs ln" style="top:222.8px;color:#6e7681">86</div>
  <div class="abs code" style="top:222.8px">            <span class="c">if</span> wparam == <span class="n">0x25</span>:  <span class="m"># VK_LEFT</span></div>
  <div class="abs ln" style="top:241.8px;color:#6e7681">87</div>
  <div class="abs code" style="top:241.8px">                <span class="k">self</span>.paddle.move<span class="p">(</span>-<span class="k">self</span>.paddle.speed, <span class="k">self</span>.</div>
  <div class="abs code" style="top:241.8px;left:527.6px;opacity:.24">width)</div>
  <div class="abs ln" style="top:260.8px;color:#6e7681">88</div>
  <div class="abs code" style="top:260.8px">            <span class="c">elif</span> wparam == <span class="n">0x27</span>:  <span class="m"># VK_RIGHT</span></div>
  <div class="abs ln" style="top:279.8px;color:#6e7681">89</div>
  <div class="abs code" style="top:279.8px">                <span class="k">self</span>.paddle.move<span class="p">(</span><span class="k">self</span>.paddle.speed, <span class="k">self</span>.w</div>
  <div class="abs code" style="top:279.8px;left:527.6px;opacity:.24">idth)</div>
  <div class="abs ln" style="top:298.8px;color:#6e7681">90</div>
  <div class="abs code" style="top:298.8px">            <span class="c">return</span> <span class="n">0</span></div>
  <div class="abs ln" style="top:317.8px;color:#6e7681">91</div>
  <div class="abs code" style="top:317.8px">       <span class="d">·</span><span class="c">elif</span><span class="d">·</span>msg<span class="d">·</span>==<span class="d">·</span>WM_SIZE:</div>
  <div class="abs ln" style="top:336.8px;color:#6e7681">92</div>
  <div class="abs code" style="top:336.8px"><span class="d">············</span>rect<span class="d">·</span>=<span class="d">·</span>wintypes.RECT<span class="p">()</span></div>
  <div class="abs ln" style="top:355.8px;color:#6e7681">93</div>
  <div class="abs code" style="top:355.8px"><span class="d">············</span>ctypes.windll.user32.GetClientRect<span class="p">(</span>hwnd,<span class="d">·</span>ctype</div>
  <div class="abs code" style="top:355.8px;left:527.6px;opacity:.24">s.byref(rect))</div>
  <div class="abs ln" style="top:374.8px;color:#6e7681">94</div>
  <div class="abs code" style="top:374.8px"><span class="d">············</span><span class="k">self</span>.width<span class="d">·</span>=<span class="d">·</span>rect.right<span class="d">·</span>-<span class="d">·</span>rect.left</div>
  <div class="abs ln" style="top:393.8px;color:#6e7681">95</div>
  <div class="abs code" style="top:393.8px"><span class="d">············</span><span class="k">self</span>.height<span class="d">·</span>=<span class="d">·</span>rect.bottom<span class="d">·</span>-<span class="d">·</span>rect.top</div>
  <div class="abs ln" style="top:412.8px;color:#6e7681">96</div>
  <div class="abs code" style="top:412.8px"><span class="d">············</span><span class="m">#</span><span class="d">·</span><span class="m">Position</span><span class="d">·</span><span class="m">paddle</span><span class="d">·</span><span class="m">at</span><span class="d">·</span><span class="m">bottom</span><span class="d">·</span><span class="m">center</span></div>
  <div class="abs ln" style="top:431.8px;color:#cccccc">97</div>
  <div class="abs code" style="top:431.8px"><span class="d">············</span><span class="k">self</span>.paddle.x = <span class="p">(</span><span class="k">self</span>.width - <span class="k">self</span>.paddle.widt</div>
  <div class="abs code" style="top:431.8px;left:527.6px;opacity:.24">h) // 2</div>
  <div class="abs ln" style="top:450.8px;color:#6e7681">98</div>
  <div class="abs code" style="top:450.8px">            <span class="k">self</span>.paddle.y = <span class="k">self</span>.height - <span class="k">self</span>.paddle.heig</div>
  <div class="abs code" style="top:450.8px;left:527.6px;opacity:.24">ht - 10</div>
  <div class="abs ln" style="top:469.8px;color:#6e7681">99</div>
  <div class="abs code" style="top:469.8px">            <span class="c">return</span> <span class="n">0</span></div>
  <div class="abs ln" style="top:488.8px;color:#6e7681">100</div>
  <div class="abs code" style="top:488.8px">        <span class="c">return</span> ctypes.windll.user32.DefWindowProcW<span class="p">(</span>hwnd, m</div>
  <div class="abs code" style="top:488.8px;left:527.6px;opacity:.24">sg, ctypes.wintypes.WPAR</div>
  <div class="abs ln" style="top:507.8px;color:#6e7681">101</div>
  <div class="abs ln" style="top:526.8px;color:#6e7681">102</div>
  <div class="abs code" style="top:526.8px">    <span class="k">def</span> <span class="f">draw</span><span class="p">(</span><span class="v">self</span>, <span class="v">hdc</span><span class="p">)</span>:</div>
  <div class="abs ln" style="top:545.8px;color:#6e7681">103</div>
  <div class="abs code" style="top:545.8px">        rect = wintypes.RECT<span class="p">(</span><span class="n">0</span>,<span class="n">0</span>,<span class="k">self</span>.width,<span class="k">self</span>.height<span class="p">)</span></div>
  <div class="abs ln" style="top:564.8px;color:#6e7681">104</div>
  <div class="abs code" style="top:564.8px">        brush = ctypes.windll.gdi32.CreateSolidBrush<span class="p">(</span><span class="n">0x00FFFFFF</span><span class="p">)</span></div>
  <svg style="left:83px;top:317px" width="14" height="16" viewBox="0 0 14 16" fill="none" stroke="#ffcc00" stroke-width="1.300" stroke-linejoin="round"><path d="M6.200 2.700A3.700 3.700 0 0 0 2.300 6.400c0 1.500.800 2.300 1.500 3.200.500.700.700 1.200.700 1.900v2.100h3.600v-2.100c0-.700.300-1.300.800-1.900.300-.400.600-.800.800-1.200"/><path d="M4.800 12.400h3"/><path d="M8.500.200l.750 1.750L11 2.700l-1.750.750L8.500 5.200l-.750-1.750L6 2.700l1.750-.750z" fill="#ffcc00" stroke="none"/><path d="M11.400 4.200l.550 1.250 1.250.550-1.250.550-.550 1.250-.550-1.250L9.600 6l1.250-.550z" fill="#ffcc00" stroke="none"/></svg>
  <div class="abs" style="left:0;top:57px;width:535px;height:38px;background:#1f1f1f;box-shadow:0 1px 2px rgba(0,0,0,.3)">
    <div class="abs ln" style="top:1.300px">60</div>
    <div class="abs code" style="top:1.300px"><span class="k">class</span> <span class="t">PongApp</span>:</div>
    <div class="abs ln" style="top:20.300px">69</div>
    <div class="abs code" style="top:20.300px">    <span class="k">def</span> <span class="f">win_proc</span><span class="p">(</span><span class="v">self</span>, <span class="v">hwnd</span>, <span class="v">msg</span>, <span class="v">wparam</span>, <span class="v">lparam</span><span class="p">)</span>:</div>
  </div>
  <div class="abs" style="left:527px;top:57px;width:8px;height:513px;background:linear-gradient(90deg,rgba(31,31,31,0),rgba(31,31,31,.85))"></div>
  <div class="abs" style="left:534px;top:57px;width:59px;height:513px;background:rgba(31,31,31,.86)"></div>
  <div class="abs" style="left:535px;top:235px;width:58px;height:14px;background:#20405f"></div>
  <div class="abs" style="left:542px;top:235px;width:21px;height:2px;background:#2d5f96"></div>
  <div class="abs" style="left:535px;top:237px;width:34px;height:2px;background:#2d5f96"></div>
  <div class="abs" style="left:535px;top:239px;width:58px;height:2px;background:#2d5f96"></div>
  <div class="abs" style="left:535px;top:241px;width:47px;height:2px;background:#2d5f96"></div>
  <div class="abs" style="left:535px;top:243px;width:48px;height:2px;background:#2d5f96"></div>
  <div class="abs" style="left:535px;top:245px;width:46px;height:2px;background:#2d5f96"></div>
  <div class="abs" style="left:535px;top:247px;width:20px;height:2px;background:#2d5f96"></div>
  <svg style="left:0;top:0" width="605" height="570" opacity=".72"><rect x="536" y="58" width="16" height="1.300" fill="#5a7f4a"/><rect x="536" y="60" width="6" height="1.300" fill="#9b6b98"/><rect x="543" y="60" width="7" height="1.300" fill="#9a9a9a"/><rect x="536" y="62" width="6" height="1.300" fill="#9b6b98"/><rect x="543" y="62" width="14" height="1.300" fill="#9a9a9a"/><rect x="558" y="62" width="2" height="1.300" fill="#9b6b98"/><rect x="561" y="62" width="8" height="1.300" fill="#9a9a9a"/><rect x="536" y="64" width="6" height="1.300" fill="#5a7f4a"/><rect x="543" y="64" width="49" height="1.300" fill="#5a7f4a"/><rect x="536" y="66" width="5" height="1.300" fill="#4b7fae"/><rect x="542" y="66" width="22" height="1.300" fill="#3f9f8c"/><rect x="540" y="68" width="8" height="1.300" fill="#9a9a9a"/><rect x="549" y="68" width="2" height="1.300" fill="#9a9a9a"/><rect x="544" y="70" width="1" height="1.300" fill="#9a9a9a"/><rect x="546" y="70" width="6" height="1.300" fill="#b07a5e"/><rect x="553" y="70" width="1" height="1.300" fill="#9a9a9a"/><rect x="555" y="70" width="8" height="1.300" fill="#9a9a9a"/><rect x="564" y="70" width="4" height="1.300" fill="#9a9a9a"/><rect x="544" y="72" width="1" height="1.300" fill="#9a9a9a"/><rect x="546" y="72" width="7" height="1.300" fill="#b07a5e"/><rect x="554" y="72" width="1" height="1.300" fill="#9a9a9a"/><rect x="556" y="72" width="9" height="1.300" fill="#9a9a9a"/><rect x="566" y="72" width="4" height="1.300" fill="#9a9a9a"/><rect x="544" y="74" width="1" height="1.300" fill="#9a9a9a"/><rect x="546" y="74" width="8" height="1.300" fill="#b07a5e"/><rect x="555" y="74" width="1" height="1.300" fill="#9a9a9a"/><rect x="557" y="74" width="10" height="1.300" fill="#9a9a9a"/><rect x="568" y="74" width="4" height="1.300" fill="#9a9a9a"/><rect x="544" y="76" width="1" height="1.300" fill="#9a9a9a"/><rect x="546" y="76" width="9" height="1.300" fill="#b07a5e"/><rect x="556" y="76" width="1" height="1.300" fill="#9a9a9a"/><rect x="558" y="76" width="8" height="1.300" fill="#9a9a9a"/><rect x="567" y="76" width="4" height="1.300" fill="#9a9a9a"/><rect x="544" y="78" width="1" height="1.300" fill="#9a9a9a"/><rect x="546" y="78" width="10" height="1.300" fill="#b07a5e"/><rect x="557" y="78" width="1" height="1.300" fill="#9a9a9a"/><rect x="559" y="78" width="9" height="1.300" fill="#9a9a9a"/><rect x="569" y="78" width="4" height="1.300" fill="#9a9a9a"/><rect x="544" y="80" width="1" height="1.300" fill="#9a9a9a"/><rect x="546" y="80" width="11" height="1.300" fill="#b07a5e"/><rect x="558" y="80" width="1" height="1.300" fill="#9a9a9a"/><rect x="560" y="80" width="10" height="1.300" fill="#9a9a9a"/><rect x="571" y="80" width="4" height="1.300" fill="#9a9a9a"/><rect x="544" y="82" width="1" height="1.300" fill="#9a9a9a"/><rect x="546" y="82" width="12" height="1.300" fill="#b07a5e"/><rect x="559" y="82" width="1" height="1.300" fill="#9a9a9a"/><rect x="561" y="82" width="8" height="1.300" fill="#9a9a9a"/><rect x="570" y="82" width="4" height="1.300" fill="#9a9a9a"/><rect x="540" y="84" width="1" height="1.300" fill="#9a9a9a"/><rect x="536" y="88" width="10" height="1.300" fill="#5a7f4a"/><rect x="536" y="90" width="7" height="1.300" fill="#9a9a9a"/><rect x="544" y="90" width="1" height="1.300" fill="#9a9a9a"/><rect x="546" y="90" width="2" height="1.300" fill="#4b7fae"/><rect x="549" y="90" width="4" height="1.300" fill="#94a88a"/><rect x="536" y="92" width="10" height="1.300" fill="#9a9a9a"/><rect x="547" y="92" width="1" height="1.300" fill="#9a9a9a"/><rect x="549" y="92" width="2" height="1.300" fill="#4b7fae"/><rect x="552" y="92" width="5" height="1.300" fill="#94a88a"/><rect x="536" y="94" width="8" height="1.300" fill="#9a9a9a"/><rect x="545" y="94" width="1" height="1.300" fill="#9a9a9a"/><rect x="547" y="94" width="2" height="1.300" fill="#4b7fae"/><rect x="550" y="94" width="6" height="1.300" fill="#94a88a"/><rect x="536" y="96" width="11" height="1.300" fill="#9a9a9a"/><rect x="548" y="96" width="1" height="1.300" fill="#9a9a9a"/><rect x="550" y="96" width="2" height="1.300" fill="#4b7fae"/><rect x="553" y="96" width="4" height="1.300" fill="#94a88a"/><rect x="536" y="98" width="9" height="1.300" fill="#9a9a9a"/><rect x="546" y="98" width="1" height="1.300" fill="#9a9a9a"/><rect x="548" y="98" width="2" height="1.300" fill="#4b7fae"/><rect x="551" y="98" width="5" height="1.300" fill="#94a88a"/><rect x="536" y="100" width="7" height="1.300" fill="#9a9a9a"/><rect x="544" y="100" width="1" height="1.300" fill="#9a9a9a"/><rect x="546" y="100" width="2" height="1.300" fill="#4b7fae"/><rect x="549" y="100" width="6" height="1.300" fill="#94a88a"/><rect x="536" y="102" width="10" height="1.300" fill="#9a9a9a"/><rect x="547" y="102" width="1" height="1.300" fill="#9a9a9a"/><rect x="549" y="102" width="2" height="1.300" fill="#4b7fae"/><rect x="552" y="102" width="4" height="1.300" fill="#94a88a"/><rect x="536" y="104" width="8" height="1.300" fill="#9a9a9a"/><rect x="545" y="104" width="1" height="1.300" fill="#9a9a9a"/><rect x="547" y="104" width="2" height="1.300" fill="#4b7fae"/><rect x="550" y="104" width="5" height="1.300" fill="#94a88a"/><rect x="536" y="106" width="11" height="1.300" fill="#9a9a9a"/><rect x="548" y="106" width="1" height="1.300" fill="#9a9a9a"/><rect x="550" y="106" width="2" height="1.300" fill="#4b7fae"/><rect x="553" y="106" width="6" height="1.300" fill="#94a88a"/><rect x="536" y="108" width="9" height="1.300" fill="#9a9a9a"/><rect x="546" y="108" width="1" height="1.300" fill="#9a9a9a"/><rect x="548" y="108" width="2" height="1.300" fill="#4b7fae"/><rect x="551" y="108" width="4" height="1.300" fill="#94a88a"/><rect x="536" y="110" width="7" height="1.300" fill="#9a9a9a"/><rect x="544" y="110" width="1" height="1.300" fill="#9a9a9a"/><rect x="546" y="110" width="2" height="1.300" fill="#4b7fae"/><rect x="549" y="110" width="5" height="1.300" fill="#94a88a"/><rect x="536" y="114" width="28" height="1.300" fill="#5a7f4a"/><rect x="536" y="116" width="7" height="1.300" fill="#9a9a9a"/><rect x="544" y="116" width="2" height="1.300" fill="#9a9a9a"/><rect x="547" y="116" width="30" height="1.300" fill="#9a9a9a"/><rect x="536" y="120" width="5" height="1.300" fill="#4b7fae"/><rect x="542" y="120" width="4" height="1.300" fill="#3f9f8c"/><rect x="540" y="122" width="3" height="1.300" fill="#4b7fae"/><rect x="544" y="122" width="8" height="1.300" fill="#b3b38c"/><rect x="553" y="122" width="14" height="1.300" fill="#9a9a9a"/><rect x="544" y="124" width="4" height="1.300" fill="#4b7fae"/><rect x="549" y="124" width="5" height="1.300" fill="#9a9a9a"/><rect x="555" y="124" width="3" height="1.300" fill="#9a9a9a"/><rect x="544" y="126" width="4" height="1.300" fill="#4b7fae"/><rect x="549" y="126" width="6" height="1.300" fill="#9a9a9a"/><rect x="556" y="126" width="3" height="1.300" fill="#9a9a9a"/><rect x="544" y="128" width="4" height="1.300" fill="#4b7fae"/><rect x="549" y="128" width="7" height="1.300" fill="#9a9a9a"/><rect x="557" y="128" width="3" height="1.300" fill="#9a9a9a"/><rect x="544" y="130" width="4" height="1.300" fill="#4b7fae"/><rect x="549" y="130" width="5" height="1.300" fill="#9a9a9a"/><rect x="555" y="130" width="3" height="1.300" fill="#9a9a9a"/><rect x="544" y="132" width="4" height="1.300" fill="#4b7fae"/><rect x="549" y="132" width="6" height="1.300" fill="#9a9a9a"/><rect x="556" y="132" width="3" height="1.300" fill="#9a9a9a"/><rect x="544" y="134" width="4" height="1.300" fill="#4b7fae"/><rect x="549" y="134" width="7" height="1.300" fill="#9a9a9a"/><rect x="557" y="134" width="3" height="1.300" fill="#9a9a9a"/><rect x="540" y="138" width="3" height="1.300" fill="#4b7fae"/><rect x="544" y="138" width="6" height="1.300" fill="#b3b38c"/><rect x="551" y="138" width="18" height="1.300" fill="#9a9a9a"/><rect x="544" y="140" width="4" height="1.300" fill="#4b7fae"/><rect x="549" y="140" width="8" height="1.300" fill="#9a9a9a"/><rect x="544" y="142" width="4" height="1.300" fill="#4b7fae"/><rect x="549" y="142" width="8" height="1.300" fill="#9a9a9a"/><rect x="544" y="144" width="2" height="1.300" fill="#9b6b98"/><rect x="547" y="144" width="4" height="1.300" fill="#4b7fae"/><rect x="552" y="144" width="12" height="1.300" fill="#9a9a9a"/><rect x="565" y="144" width="2" height="1.300" fill="#9b6b98"/><rect x="568" y="144" width="4" height="1.300" fill="#4b7fae"/><rect x="573" y="144" width="8" height="1.300" fill="#9a9a9a"/><rect x="582" y="144" width="4" height="1.300" fill="#4b7fae"/><rect x="587" y="144" width="5" height="1.300" fill="#9a9a9a"/><rect x="548" y="146" width="4" height="1.300" fill="#4b7fae"/><rect x="553" y="146" width="8" height="1.300" fill="#9a9a9a"/><rect x="544" y="148" width="2" height="1.300" fill="#9b6b98"/><rect x="547" y="148" width="4" height="1.300" fill="#4b7fae"/><rect x="552" y="148" width="12" height="1.300" fill="#9a9a9a"/><rect x="565" y="148" width="2" height="1.300" fill="#9b6b98"/><rect x="568" y="148" width="4" height="1.300" fill="#4b7fae"/><rect x="573" y="148" width="8" height="1.300" fill="#9a9a9a"/><rect x="582" y="148" width="4" height="1.300" fill="#4b7fae"/><rect x="587" y="148" width="5" height="1.300" fill="#9a9a9a"/><rect x="548" y="150" width="4" height="1.300" fill="#4b7fae"/><rect x="553" y="150" width="8" height="1.300" fill="#9a9a9a"/><rect x="536" y="154" width="5" height="1.300" fill="#4b7fae"/><rect x="542" y="154" width="6" height="1.300" fill="#3f9f8c"/><rect x="540" y="156" width="3" height="1.300" fill="#4b7fae"/><rect x="544" y="156" width="8" height="1.300" fill="#b3b38c"/><rect x="553" y="156" width="10" height="1.300" fill="#9a9a9a"/><rect x="544" y="158" width="4" height="1.300" fill="#4b7fae"/><rect x="549" y="158" width="5" height="1.300" fill="#9a9a9a"/><rect x="555" y="158" width="3" height="1.300" fill="#9a9a9a"/><rect x="544" y="160" width="4" height="1.300" fill="#4b7fae"/><rect x="549" y="160" width="6" height="1.300" fill="#9a9a9a"/><rect x="556" y="160" width="3" height="1.300" fill="#9a9a9a"/><rect x="544" y="162" width="4" height="1.300" fill="#4b7fae"/><rect x="549" y="162" width="7" height="1.300" fill="#9a9a9a"/><rect x="557" y="162" width="3" height="1.300" fill="#9a9a9a"/><rect x="544" y="164" width="4" height="1.300" fill="#4b7fae"/><rect x="549" y="164" width="8" height="1.300" fill="#9a9a9a"/><rect x="558" y="164" width="3" height="1.300" fill="#9a9a9a"/><rect x="544" y="166" width="4" height="1.300" fill="#4b7fae"/><rect x="549" y="166" width="5" height="1.300" fill="#9a9a9a"/><rect x="555" y="166" width="3" height="1.300" fill="#9a9a9a"/><rect x="544" y="168" width="4" height="1.300" fill="#4b7fae"/><rect x="549" y="168" width="6" height="1.300" fill="#9a9a9a"/><rect x="556" y="168" width="3" height="1.300" fill="#9a9a9a"/><rect x="540" y="172" width="3" height="1.300" fill="#4b7fae"/><rect x="544" y="172" width="4" height="1.300" fill="#b3b38c"/><rect x="549" y="172" width="16" height="1.300" fill="#9a9a9a"/><rect x="544" y="174" width="4" height="1.300" fill="#4b7fae"/><rect x="549" y="174" width="6" height="1.300" fill="#9a9a9a"/><rect x="544" y="176" width="2" height="1.300" fill="#9b6b98"/><rect x="547" y="176" width="4" height="1.300" fill="#4b7fae"/><rect x="552" y="176" width="10" height="1.300" fill="#9a9a9a"/><rect x="563" y="176" width="4" height="1.300" fill="#4b7fae"/><rect x="568" y="176" width="6" height="1.300" fill="#9a9a9a"/><rect x="548" y="178" width="4" height="1.300" fill="#4b7fae"/><rect x="553" y="178" width="6" height="1.300" fill="#9a9a9a"/><rect x="536" y="182" width="5" height="1.300" fill="#4b7fae"/><rect x="542" y="182" width="7" height="1.300" fill="#3f9f8c"/><rect x="540" y="184" width="3" height="1.300" fill="#4b7fae"/><rect x="544" y="184" width="8" height="1.300" fill="#b3b38c"/><rect x="553" y="184" width="8" height="1.300" fill="#9a9a9a"/><rect x="544" y="186" width="4" height="1.300" fill="#4b7fae"/><rect x="549" y="186" width="6" height="1.300" fill="#9a9a9a"/><rect x="556" y="186" width="3" height="1.300" fill="#9a9a9a"/><rect x="560" y="186" width="6" height="1.300" fill="#9a9a9a"/><rect x="544" y="188" width="4" height="1.300" fill="#4b7fae"/><rect x="549" y="188" width="7" height="1.300" fill="#9a9a9a"/><rect x="557" y="188" width="3" height="1.300" fill="#9a9a9a"/><rect x="561" y="188" width="11" height="1.300" fill="#9a9a9a"/><rect x="544" y="190" width="4" height="1.300" fill="#4b7fae"/><rect x="549" y="190" width="8" height="1.300" fill="#9a9a9a"/><rect x="558" y="190" width="3" height="1.300" fill="#9a9a9a"/><rect x="562" y="190" width="16" height="1.300" fill="#9a9a9a"/><rect x="544" y="192" width="4" height="1.300" fill="#4b7fae"/><rect x="549" y="192" width="6" height="1.300" fill="#9a9a9a"/><rect x="556" y="192" width="3" height="1.300" fill="#9a9a9a"/><rect x="560" y="192" width="7" height="1.300" fill="#9a9a9a"/><rect x="544" y="194" width="4" height="1.300" fill="#4b7fae"/><rect x="549" y="194" width="7" height="1.300" fill="#9a9a9a"/><rect x="557" y="194" width="3" height="1.300" fill="#9a9a9a"/><rect x="561" y="194" width="12" height="1.300" fill="#9a9a9a"/><rect x="544" y="196" width="4" height="1.300" fill="#4b7fae"/><rect x="549" y="196" width="8" height="1.300" fill="#9a9a9a"/><rect x="558" y="196" width="3" height="1.300" fill="#9a9a9a"/><rect x="562" y="196" width="17" height="1.300" fill="#9a9a9a"/><rect x="544" y="198" width="4" height="1.300" fill="#4b7fae"/><rect x="549" y="198" width="6" height="1.300" fill="#9a9a9a"/><rect x="556" y="198" width="3" height="1.300" fill="#9a9a9a"/><rect x="560" y="198" width="8" height="1.300" fill="#9a9a9a"/><rect x="540" y="202" width="3" height="1.300" fill="#4b7fae"/><rect x="544" y="202" width="8" height="1.300" fill="#b3b38c"/><rect x="553" y="202" width="28" height="1.300" fill="#9a9a9a"/><rect x="544" y="204" width="2" height="1.300" fill="#9b6b98"/><rect x="547" y="204" width="8" height="1.300" fill="#9a9a9a"/><rect x="548" y="206" width="2" height="1.300" fill="#9a9a9a"/><rect x="551" y="206" width="14" height="1.300" fill="#9a9a9a"/><rect x="548" y="208" width="3" height="1.300" fill="#9a9a9a"/><rect x="552" y="208" width="28" height="1.300" fill="#9a9a9a"/><rect x="548" y="210" width="4" height="1.300" fill="#4b7fae"/><rect x="553" y="210" width="10" height="1.300" fill="#9a9a9a"/><rect x="548" y="212" width="30" height="1.300" fill="#9a9a9a"/><rect x="548" y="214" width="6" height="1.300" fill="#9b6b98"/><rect x="555" y="214" width="2" height="1.300" fill="#94a88a"/><rect x="544" y="216" width="4" height="1.300" fill="#9b6b98"/><rect x="549" y="216" width="14" height="1.300" fill="#9a9a9a"/><rect x="548" y="218" width="4" height="1.300" fill="#4b7fae"/><rect x="553" y="218" width="8" height="1.300" fill="#9a9a9a"/><rect x="548" y="220" width="34" height="1.300" fill="#9a9a9a"/><rect x="583" y="220" width="4" height="1.300" fill="#4b7fae"/><rect x="548" y="222" width="6" height="1.300" fill="#9b6b98"/><rect x="555" y="222" width="2" height="1.300" fill="#94a88a"/><rect x="544" y="224" width="4" height="1.300" fill="#9b6b98"/><rect x="549" y="224" width="16" height="1.300" fill="#9a9a9a"/><rect x="548" y="226" width="2" height="1.300" fill="#9b6b98"/><rect x="551" y="226" width="10" height="1.300" fill="#9a9a9a"/><rect x="562" y="226" width="4" height="1.300" fill="#94a88a"/><rect x="567" y="226" width="10" height="1.300" fill="#5a7f4a"/><rect x="552" y="228" width="4" height="1.300" fill="#4b7fae"/><rect x="557" y="228" width="24" height="1.300" fill="#9a9a9a"/><rect x="582" y="228" width="4" height="1.300" fill="#4b7fae"/><rect x="548" y="230" width="4" height="1.300" fill="#9b6b98"/><rect x="553" y="230" width="10" height="1.300" fill="#9a9a9a"/><rect x="564" y="230" width="4" height="1.300" fill="#94a88a"/><rect x="569" y="230" width="10" height="1.300" fill="#5a7f4a"/><rect x="552" y="232" width="4" height="1.300" fill="#4b7fae"/><rect x="557" y="232" width="22" height="1.300" fill="#9a9a9a"/><rect x="580" y="232" width="4" height="1.300" fill="#4b7fae"/><rect x="548" y="234" width="6" height="1.300" fill="#9b6b98"/><rect x="555" y="234" width="2" height="1.300" fill="#94a88a"/><rect x="544" y="236" width="4" height="1.300" fill="#9b6b98"/><rect x="549" y="236" width="14" height="1.300" fill="#9a9a9a"/><rect x="548" y="238" width="20" height="1.300" fill="#9a9a9a"/><rect x="548" y="240" width="44" height="1.300" fill="#9a9a9a"/><rect x="548" y="242" width="4" height="1.300" fill="#4b7fae"/><rect x="553" y="242" width="28" height="1.300" fill="#9a9a9a"/><rect x="548" y="244" width="4" height="1.300" fill="#4b7fae"/><rect x="553" y="244" width="30" height="1.300" fill="#9a9a9a"/><rect x="548" y="246" width="34" height="1.300" fill="#5a7f4a"/><rect x="548" y="248" width="4" height="1.300" fill="#4b7fae"/><rect x="553" y="248" width="18" height="1.300" fill="#9a9a9a"/><rect x="572" y="248" width="4" height="1.300" fill="#4b7fae"/><rect x="577" y="248" width="14" height="1.300" fill="#9a9a9a"/><rect x="548" y="250" width="4" height="1.300" fill="#4b7fae"/><rect x="553" y="250" width="16" height="1.300" fill="#9a9a9a"/><rect x="570" y="250" width="4" height="1.300" fill="#4b7fae"/><rect x="575" y="250" width="17" height="1.300" fill="#9a9a9a"/><rect x="548" y="252" width="6" height="1.300" fill="#9b6b98"/><rect x="555" y="252" width="2" height="1.300" fill="#94a88a"/><rect x="544" y="254" width="6" height="1.300" fill="#9b6b98"/><rect x="551" y="254" width="41" height="1.300" fill="#9a9a9a"/><rect x="540" y="258" width="3" height="1.300" fill="#4b7fae"/><rect x="544" y="258" width="4" height="1.300" fill="#b3b38c"/><rect x="549" y="258" width="10" height="1.300" fill="#9a9a9a"/><rect x="544" y="260" width="40" height="1.300" fill="#9a9a9a"/><rect x="544" y="262" width="46" height="1.300" fill="#9a9a9a"/><rect x="544" y="264" width="44" height="1.300" fill="#9a9a9a"/><rect x="544" y="266" width="34" height="1.300" fill="#9a9a9a"/><rect x="544" y="270" width="4" height="1.300" fill="#9a9a9a"/><rect x="549" y="270" width="30" height="1.300" fill="#9a9a9a"/><rect x="556" y="272" width="4" height="1.300" fill="#4b7fae"/><rect x="561" y="272" width="10" height="1.300" fill="#9a9a9a"/><rect x="572" y="272" width="4" height="1.300" fill="#4b7fae"/><rect x="577" y="272" width="10" height="1.300" fill="#9a9a9a"/><rect x="556" y="274" width="4" height="1.300" fill="#4b7fae"/><rect x="561" y="274" width="10" height="1.300" fill="#9a9a9a"/><rect x="572" y="274" width="4" height="1.300" fill="#4b7fae"/><rect x="577" y="274" width="10" height="1.300" fill="#9a9a9a"/><rect x="544" y="276" width="40" height="1.300" fill="#9a9a9a"/><rect x="544" y="278" width="44" height="1.300" fill="#9a9a9a"/><rect x="544" y="280" width="34" height="1.300" fill="#9a9a9a"/><rect x="544" y="284" width="4" height="1.300" fill="#9a9a9a"/><rect x="549" y="284" width="30" height="1.300" fill="#9a9a9a"/><rect x="556" y="286" width="4" height="1.300" fill="#4b7fae"/><rect x="561" y="286" width="10" height="1.300" fill="#9a9a9a"/><rect x="572" y="286" width="4" height="1.300" fill="#4b7fae"/><rect x="577" y="286" width="10" height="1.300" fill="#9a9a9a"/><rect x="556" y="288" width="4" height="1.300" fill="#4b7fae"/><rect x="561" y="288" width="10" height="1.300" fill="#9a9a9a"/><rect x="572" y="288" width="4" height="1.300" fill="#4b7fae"/><rect x="577" y="288" width="10" height="1.300" fill="#9a9a9a"/><rect x="544" y="290" width="40" height="1.300" fill="#9a9a9a"/><rect x="544" y="292" width="44" height="1.300" fill="#9a9a9a"/><rect x="544" y="294" width="34" height="1.300" fill="#9a9a9a"/><rect x="540" y="298" width="3" height="1.300" fill="#4b7fae"/><rect x="544" y="298" width="6" height="1.300" fill="#b3b38c"/><rect x="551" y="298" width="6" height="1.300" fill="#9a9a9a"/><rect x="544" y="300" width="4" height="1.300" fill="#4b7fae"/><rect x="549" y="300" width="10" height="1.300" fill="#9a9a9a"/><rect x="544" y="302" width="4" height="1.300" fill="#4b7fae"/><rect x="549" y="302" width="24" height="1.300" fill="#9a9a9a"/><rect x="574" y="302" width="4" height="1.300" fill="#4b7fae"/><rect x="579" y="302" width="12" height="1.300" fill="#9a9a9a"/><rect x="544" y="304" width="4" height="1.300" fill="#4b7fae"/><rect x="549" y="304" width="20" height="1.300" fill="#9a9a9a"/><rect x="570" y="304" width="4" height="1.300" fill="#4b7fae"/><rect x="575" y="304" width="8" height="1.300" fill="#9a9a9a"/><rect x="548" y="306" width="4" height="1.300" fill="#4b7fae"/><rect x="553" y="306" width="27" height="1.300" fill="#9a9a9a"/><rect x="581" y="306" width="4" height="1.300" fill="#4b7fae"/><rect x="586" y="306" width="6" height="1.300" fill="#9a9a9a"/><rect x="544" y="308" width="4" height="1.300" fill="#4b7fae"/><rect x="549" y="308" width="34" height="1.300" fill="#9a9a9a"/><rect x="584" y="308" width="4" height="1.300" fill="#4b7fae"/><rect x="589" y="308" width="3" height="1.300" fill="#9a9a9a"/><rect x="548" y="310" width="4" height="1.300" fill="#4b7fae"/><rect x="553" y="310" width="25" height="1.300" fill="#9a9a9a"/><rect x="579" y="310" width="4" height="1.300" fill="#4b7fae"/><rect x="584" y="310" width="8" height="1.300" fill="#9a9a9a"/><rect x="544" y="312" width="4" height="1.300" fill="#4b7fae"/><rect x="549" y="312" width="32" height="1.300" fill="#9a9a9a"/><rect x="582" y="312" width="4" height="1.300" fill="#4b7fae"/><rect x="587" y="312" width="5" height="1.300" fill="#9a9a9a"/><rect x="548" y="314" width="4" height="1.300" fill="#4b7fae"/><rect x="553" y="314" width="23" height="1.300" fill="#9a9a9a"/><rect x="577" y="314" width="4" height="1.300" fill="#4b7fae"/><rect x="582" y="314" width="8" height="1.300" fill="#9a9a9a"/><rect x="544" y="316" width="2" height="1.300" fill="#9b6b98"/><rect x="547" y="316" width="4" height="1.300" fill="#4b7fae"/><rect x="552" y="316" width="22" height="1.300" fill="#9a9a9a"/><rect x="548" y="318" width="4" height="1.300" fill="#4b7fae"/><rect x="553" y="318" width="14" height="1.300" fill="#9a9a9a"/><rect x="544" y="320" width="2" height="1.300" fill="#9b6b98"/><rect x="547" y="320" width="24" height="1.300" fill="#9a9a9a"/><rect x="548" y="322" width="4" height="1.300" fill="#4b7fae"/><rect x="553" y="322" width="8" height="1.300" fill="#9a9a9a"/><rect x="540" y="326" width="3" height="1.300" fill="#4b7fae"/><rect x="544" y="326" width="3" height="1.300" fill="#b3b38c"/><rect x="548" y="326" width="6" height="1.300" fill="#9a9a9a"/><rect x="544" y="328" width="12" height="1.300" fill="#9a9a9a"/><rect x="557" y="328" width="10" height="1.300" fill="#9a9a9a"/><rect x="544" y="330" width="10" height="1.300" fill="#9a9a9a"/><rect x="555" y="330" width="14" height="1.300" fill="#4b7fae"/><rect x="544" y="334" width="5" height="1.300" fill="#4b7fae"/><rect x="550" y="334" width="20" height="1.300" fill="#3f9f8c"/><rect x="548" y="336" width="8" height="1.300" fill="#9a9a9a"/><rect x="557" y="336" width="2" height="1.300" fill="#9a9a9a"/><rect x="552" y="338" width="1" height="1.300" fill="#9a9a9a"/><rect x="554" y="338" width="9" height="1.300" fill="#b07a5e"/><rect x="564" y="338" width="3" height="1.300" fill="#9a9a9a"/><rect x="568" y="338" width="10" height="1.300" fill="#9a9a9a"/><rect x="552" y="340" width="1" height="1.300" fill="#9a9a9a"/><rect x="554" y="340" width="10" height="1.300" fill="#b07a5e"/><rect x="565" y="340" width="3" height="1.300" fill="#9a9a9a"/><rect x="569" y="340" width="13" height="1.300" fill="#9a9a9a"/><rect x="552" y="342" width="1" height="1.300" fill="#9a9a9a"/><rect x="554" y="342" width="11" height="1.300" fill="#b07a5e"/><rect x="566" y="342" width="3" height="1.300" fill="#9a9a9a"/><rect x="570" y="342" width="16" height="1.300" fill="#9a9a9a"/><rect x="552" y="344" width="1" height="1.300" fill="#9a9a9a"/><rect x="554" y="344" width="12" height="1.300" fill="#b07a5e"/><rect x="567" y="344" width="3" height="1.300" fill="#9a9a9a"/><rect x="571" y="344" width="10" height="1.300" fill="#9a9a9a"/><rect x="552" y="346" width="1" height="1.300" fill="#9a9a9a"/><rect x="554" y="346" width="9" height="1.300" fill="#b07a5e"/><rect x="564" y="346" width="3" height="1.300" fill="#9a9a9a"/><rect x="568" y="346" width="13" height="1.300" fill="#9a9a9a"/><rect x="552" y="348" width="1" height="1.300" fill="#9a9a9a"/><rect x="554" y="348" width="10" height="1.300" fill="#b07a5e"/><rect x="565" y="348" width="3" height="1.300" fill="#9a9a9a"/><rect x="569" y="348" width="16" height="1.300" fill="#9a9a9a"/><rect x="552" y="350" width="1" height="1.300" fill="#9a9a9a"/><rect x="554" y="350" width="11" height="1.300" fill="#b07a5e"/><rect x="566" y="350" width="3" height="1.300" fill="#9a9a9a"/><rect x="570" y="350" width="10" height="1.300" fill="#9a9a9a"/><rect x="552" y="352" width="1" height="1.300" fill="#9a9a9a"/><rect x="554" y="352" width="12" height="1.300" fill="#b07a5e"/><rect x="567" y="352" width="3" height="1.300" fill="#9a9a9a"/><rect x="571" y="352" width="13" height="1.300" fill="#9a9a9a"/><rect x="552" y="354" width="1" height="1.300" fill="#9a9a9a"/><rect x="554" y="354" width="9" height="1.300" fill="#b07a5e"/><rect x="564" y="354" width="3" height="1.300" fill="#9a9a9a"/><rect x="568" y="354" width="16" height="1.300" fill="#9a9a9a"/><rect x="552" y="356" width="1" height="1.300" fill="#9a9a9a"/><rect x="554" y="356" width="10" height="1.300" fill="#b07a5e"/><rect x="565" y="356" width="3" height="1.300" fill="#9a9a9a"/><rect x="569" y="356" width="10" height="1.300" fill="#9a9a9a"/><rect x="552" y="358" width="1" height="1.300" fill="#9a9a9a"/><rect x="554" y="358" width="11" height="1.300" fill="#b07a5e"/><rect x="566" y="358" width="3" height="1.300" fill="#9a9a9a"/><rect x="570" y="358" width="13" height="1.300" fill="#9a9a9a"/><rect x="552" y="360" width="1" height="1.300" fill="#9a9a9a"/><rect x="554" y="360" width="12" height="1.300" fill="#b07a5e"/><rect x="567" y="360" width="3" height="1.300" fill="#9a9a9a"/><rect x="571" y="360" width="16" height="1.300" fill="#9a9a9a"/><rect x="552" y="362" width="1" height="1.300" fill="#9a9a9a"/><rect x="554" y="362" width="9" height="1.300" fill="#b07a5e"/><rect x="564" y="362" width="3" height="1.300" fill="#9a9a9a"/><rect x="568" y="362" width="10" height="1.300" fill="#9a9a9a"/><rect x="552" y="364" width="1" height="1.300" fill="#9a9a9a"/><rect x="554" y="364" width="10" height="1.300" fill="#b07a5e"/><rect x="565" y="364" width="3" height="1.300" fill="#9a9a9a"/><rect x="569" y="364" width="13" height="1.300" fill="#9a9a9a"/><rect x="548" y="366" width="1" height="1.300" fill="#9a9a9a"/><rect x="544" y="370" width="10" height="1.300" fill="#9a9a9a"/><rect x="555" y="370" width="2" height="1.300" fill="#9a9a9a"/><rect x="558" y="370" width="14" height="1.300" fill="#9a9a9a"/><rect x="544" y="372" width="11" height="1.300" fill="#9a9a9a"/><rect x="556" y="372" width="2" height="1.300" fill="#9a9a9a"/><rect x="559" y="372" width="19" height="1.300" fill="#9a9a9a"/><rect x="544" y="374" width="12" height="1.300" fill="#9a9a9a"/><rect x="557" y="374" width="2" height="1.300" fill="#9a9a9a"/><rect x="560" y="374" width="24" height="1.300" fill="#9a9a9a"/><rect x="544" y="376" width="13" height="1.300" fill="#9a9a9a"/><rect x="558" y="376" width="2" height="1.300" fill="#9a9a9a"/><rect x="561" y="376" width="29" height="1.300" fill="#9a9a9a"/><rect x="544" y="378" width="14" height="1.300" fill="#9a9a9a"/><rect x="559" y="378" width="2" height="1.300" fill="#9a9a9a"/><rect x="562" y="378" width="14" height="1.300" fill="#9a9a9a"/><rect x="544" y="380" width="10" height="1.300" fill="#9a9a9a"/><rect x="555" y="380" width="2" height="1.300" fill="#9a9a9a"/><rect x="558" y="380" width="19" height="1.300" fill="#9a9a9a"/><rect x="544" y="382" width="11" height="1.300" fill="#9a9a9a"/><rect x="556" y="382" width="2" height="1.300" fill="#9a9a9a"/><rect x="559" y="382" width="24" height="1.300" fill="#9a9a9a"/><rect x="544" y="384" width="12" height="1.300" fill="#9a9a9a"/><rect x="557" y="384" width="2" height="1.300" fill="#9a9a9a"/><rect x="560" y="384" width="29" height="1.300" fill="#9a9a9a"/><rect x="544" y="386" width="13" height="1.300" fill="#9a9a9a"/><rect x="558" y="386" width="2" height="1.300" fill="#9a9a9a"/><rect x="561" y="386" width="14" height="1.300" fill="#9a9a9a"/><rect x="544" y="388" width="14" height="1.300" fill="#9a9a9a"/><rect x="559" y="388" width="2" height="1.300" fill="#9a9a9a"/><rect x="562" y="388" width="19" height="1.300" fill="#9a9a9a"/><rect x="544" y="390" width="10" height="1.300" fill="#9a9a9a"/><rect x="555" y="390" width="2" height="1.300" fill="#9a9a9a"/><rect x="558" y="390" width="24" height="1.300" fill="#9a9a9a"/><rect x="544" y="394" width="4" height="1.300" fill="#9a9a9a"/><rect x="549" y="394" width="2" height="1.300" fill="#9a9a9a"/><rect x="552" y="394" width="40" height="1.300" fill="#9a9a9a"/><rect x="544" y="396" width="2" height="1.300" fill="#9b6b98"/><rect x="547" y="396" width="3" height="1.300" fill="#9b6b98"/><rect x="551" y="396" width="6" height="1.300" fill="#9a9a9a"/><rect x="548" y="398" width="5" height="1.300" fill="#9b6b98"/><rect x="554" y="398" width="22" height="1.300" fill="#3f9f8c"/><rect x="577" y="398" width="10" height="1.300" fill="#b07a5e"/><rect x="544" y="402" width="4" height="1.300" fill="#9a9a9a"/><rect x="549" y="402" width="4" height="1.300" fill="#4b7fae"/><rect x="554" y="402" width="10" height="1.300" fill="#9a9a9a"/><rect x="565" y="402" width="4" height="1.300" fill="#94a88a"/><rect x="570" y="402" width="4" height="1.300" fill="#94a88a"/><rect x="544" y="404" width="4" height="1.300" fill="#9a9a9a"/><rect x="549" y="404" width="34" height="1.300" fill="#9a9a9a"/><rect x="548" y="408" width="4" height="1.300" fill="#9a9a9a"/><rect x="548" y="410" width="4" height="1.300" fill="#b07a5e"/><rect x="553" y="410" width="10" height="1.300" fill="#b07a5e"/><rect x="548" y="412" width="14" height="1.300" fill="#9a9a9a"/><rect x="548" y="414" width="1" height="1.300" fill="#9a9a9a"/><rect x="548" y="416" width="1" height="1.300" fill="#9a9a9a"/><rect x="548" y="418" width="6" height="1.300" fill="#9a9a9a"/><rect x="548" y="420" width="8" height="1.300" fill="#9a9a9a"/><rect x="548" y="422" width="1" height="1.300" fill="#9a9a9a"/><rect x="548" y="424" width="1" height="1.300" fill="#9a9a9a"/><rect x="548" y="426" width="6" height="1.300" fill="#9a9a9a"/><rect x="548" y="428" width="1" height="1.300" fill="#9a9a9a"/><rect x="548" y="430" width="1" height="1.300" fill="#9a9a9a"/><rect x="544" y="432" width="1" height="1.300" fill="#9a9a9a"/><rect x="544" y="434" width="2" height="1.300" fill="#9b6b98"/><rect x="547" y="434" width="3" height="1.300" fill="#9b6b98"/><rect x="551" y="434" width="4" height="1.300" fill="#9a9a9a"/><rect x="548" y="436" width="5" height="1.300" fill="#9b6b98"/><rect x="554" y="436" width="22" height="1.300" fill="#3f9f8c"/><rect x="577" y="436" width="10" height="1.300" fill="#b07a5e"/><rect x="544" y="440" width="26" height="1.300" fill="#5a7f4a"/><rect x="544" y="442" width="4" height="1.300" fill="#4b7fae"/><rect x="549" y="442" width="8" height="1.300" fill="#9a9a9a"/><rect x="558" y="442" width="4" height="1.300" fill="#4b7fae"/><rect x="563" y="442" width="6" height="1.300" fill="#9a9a9a"/><rect x="570" y="442" width="4" height="1.300" fill="#4b7fae"/><rect x="575" y="442" width="10" height="1.300" fill="#9a9a9a"/><rect x="544" y="444" width="4" height="1.300" fill="#4b7fae"/><rect x="549" y="444" width="8" height="1.300" fill="#9a9a9a"/><rect x="558" y="444" width="4" height="1.300" fill="#4b7fae"/><rect x="563" y="444" width="6" height="1.300" fill="#9a9a9a"/><rect x="570" y="444" width="4" height="1.300" fill="#4b7fae"/><rect x="575" y="444" width="10" height="1.300" fill="#9a9a9a"/><rect x="544" y="448" width="44" height="1.300" fill="#9a9a9a"/><rect x="589" y="448" width="3" height="1.300" fill="#9a9a9a"/><rect x="544" y="450" width="36" height="1.300" fill="#9a9a9a"/><rect x="544" y="454" width="36" height="1.300" fill="#9a9a9a"/><rect x="581" y="454" width="4" height="1.300" fill="#94a88a"/><rect x="544" y="458" width="3" height="1.300" fill="#9a9a9a"/><rect x="548" y="458" width="10" height="1.300" fill="#9a9a9a"/><rect x="544" y="460" width="5" height="1.300" fill="#9b6b98"/><rect x="550" y="460" width="40" height="1.300" fill="#9a9a9a"/><rect x="548" y="462" width="44" height="1.300" fill="#9a9a9a"/><rect x="548" y="464" width="44" height="1.300" fill="#9a9a9a"/><rect x="536" y="468" width="2" height="1.300" fill="#9b6b98"/><rect x="539" y="468" width="10" height="1.300" fill="#4b7fae"/><rect x="550" y="468" width="4" height="1.300" fill="#9a9a9a"/><rect x="555" y="468" width="10" height="1.300" fill="#b07a5e"/><rect x="540" y="470" width="3" height="1.300" fill="#9a9a9a"/><rect x="544" y="470" width="8" height="1.300" fill="#3f9f8c"/><rect x="540" y="472" width="8" height="1.300" fill="#9a9a9a"/></svg>
  <div class="abs" style="left:593px;top:57px;width:12px;height:513px;background:#1f1f1f;border-left:1px solid #121212;border-top:1px solid #121212"></div>
  <div class="abs" style="left:594px;top:222px;width:11px;height:58px;background:#464646"></div>
  <div class="abs" style="left:594px;top:263.5px;width:11px;height:2px;background:#a0a0a0"></div>
  <div class="abs" style="left:81px;top:558px;width:220px;height:12px;background:rgba(121,121,121,.32)"></div>
</div>

<!-- ================= PANEL ================= -->
<div id="panel" class="abs">
  <div class="abs ptab" style="left:17.5px;color:#9d9d9d"><span class="fx" style="transform:scaleX(0.9176)">PROBLEMS</span></div>
  <div class="abs ptab" style="left:97.9px;color:#9d9d9d"><span class="fx" style="transform:scaleX(0.9020)">OUTPUT</span></div>
  <div class="abs ptab" style="left:163.3px;color:#9d9d9d"><span class="fx" style="transform:scaleX(0.8847)">DEBUG CONSOLE</span></div>
  <div class="abs ptab" style="left:272.7px;color:#e7e7e7"><span class="fx" style="transform:scaleX(0.9169)">TERMINAL</span></div>
  <div class="abs ptab" style="left:347.9px;color:#9d9d9d"><span class="fx" style="transform:scaleX(0.8355)">PORTS</span></div>
  <div class="abs ptab" style="left:403.6px;color:#9d9d9d"><span class="fx" style="transform:scaleX(0.9288)">COMMENTS</span></div>
  <div class="abs" style="left:270px;top:28px;width:56px;height:1px;background:#0078d4"></div>
  <svg style="left:487px;top:10.700px" width="14" height="14" viewBox="0 0 14 14" fill="none" stroke="#d0d0d0" stroke-width="1.150"><path d="M7 .500v13M.500 7h13"/></svg>
  <svg style="left:506px;top:14px" width="9" height="9" viewBox="0 0 9 9" fill="none" stroke="#d0d0d0" stroke-width="1.100"><path d="M.800 2.500 4.500 6.200 8.200 2.500"/></svg>
  <svg style="left:525.5px;top:9.700px" width="16" height="16" viewBox="0 0 16 16" fill="#d0d0d0"><circle cx="3.500" cy="8" r="1.050"/><circle cx="8" cy="8" r="1.050"/><circle cx="12.500" cy="8" r="1.050"/></svg>
  <div class="abs" style="left:552px;top:10px;width:1px;height:16px;background:#5a5a5a"></div>
  <svg style="left:565.5px;top:10.500px" width="14" height="13" viewBox="0 0 14 13" fill="none" stroke="#d0d0d0" stroke-width="1.200"><path d="M.600 4V1.600a1 1 0 0 1 1-1H4.500M9.500.600h2.900a1 1 0 0 1 1 1V4M13.400 9v2.400a1 1 0 0 1-1 1H9.500M4.500 12.400H1.600a1 1 0 0 1-1-1V9"/></svg>
  <svg style="left:593.5px;top:12.200px" width="11" height="11" viewBox="0 0 11 11" fill="none" stroke="#d0d0d0" stroke-width="1.200"><path d="M.500.500l10 10M10.500.500.500 10.500"/></svg>
  <div class="abs term" style="left:20.2px;top:47.6px"><span class="fx" style="transform:scaleX(0.9093)">PS C:\Users\f13nd\vscode_projects&gt; <span class="y">python</span> pong/pong.py</span></div>
  <div class="abs term" style="left:20.2px;top:64.6px"><span class="fx" style="transform:scaleX(0.9093)">PS C:\Users\f13nd\vscode_projects&gt; <span class="y">python</span> pong/pong.py</span></div>
  <div class="abs term" style="left:20.2px;top:81.6px"><span class="fx" style="transform:scaleX(0.9093)">PS C:\Users\f13nd\vscode_projects&gt; <span class="y">python</span> pong/pong.py</span></div>
  <div class="abs" style="left:20px;top:99.5px;width:7px;height:16px;border:1px solid #cccccc"></div>
  <div class="abs" style="left:473px;top:47px;width:14px;height:1px;background:#0b0b0b"></div>
  <div class="abs" style="left:473px;top:47px;width:1px;height:360px;background:#0b0b0b"></div>
  <div class="abs" style="left:487px;top:34px;width:1px;height:372px;background:#2b2b2b"></div>
  <div class="abs" style="left:488px;top:100px;width:117px;height:22px;background:#37373d"></div>
  <div class="abs" style="left:488px;top:100px;width:1px;height:22px;background:#0078d4"></div>
  <svg style="left:497.5px;top:36.5px" width="16" height="17" viewBox="0 0 16 17"><path fill="#c8c8c8" d="M8 0a1.900 1.900 0 0 1 1.100 3.450V4.200h1.400a3.700 3.700 0 0 1 3.700 3.700v.600l1.300 1.900-1.300 1.900v.500a3.700 3.700 0 0 1-3.700 3.700h-5a3.700 3.700 0 0 1-3.700-3.700v-.500L.500 10.400l1.300-1.900v-.600a3.700 3.700 0 0 1 3.700-3.700h1.400v-.750A1.900 1.900 0 0 1 8 0z"/><rect x="5" y="7.500" width="2" height="5" rx="1" fill="#181818"/><rect x="9" y="7.500" width="2" height="5" rx="1" fill="#181818"/></svg>
  <div class="abs" style="left:517px;top:35.5px;height:20px;line-height:20px;font-size:13px;color:#cccccc;white-space:nowrap"><span class="fx" style="transform:scaleX(0.9553)">Cline</span></div>
  <svg style="left:497.5px;top:58.6px" width="16" height="17" viewBox="0 0 16 17"><path fill="#c8c8c8" d="M8 0a1.900 1.900 0 0 1 1.100 3.450V4.200h1.400a3.700 3.700 0 0 1 3.700 3.700v.600l1.300 1.900-1.300 1.900v.500a3.700 3.700 0 0 1-3.700 3.700h-5a3.700 3.700 0 0 1-3.700-3.700v-.500L.500 10.400l1.300-1.900v-.600a3.700 3.700 0 0 1 3.700-3.700h1.400v-.750A1.900 1.900 0 0 1 8 0z"/><rect x="5" y="7.500" width="2" height="5" rx="1" fill="#181818"/><rect x="9" y="7.500" width="2" height="5" rx="1" fill="#181818"/></svg>
  <div class="abs" style="left:517px;top:57.6px;height:20px;line-height:20px;font-size:13px;color:#cccccc;white-space:nowrap"><span class="fx" style="transform:scaleX(0.9553)">Cline</span></div>
  <svg style="left:497.5px;top:80.7px" width="16" height="17" viewBox="0 0 16 17"><path fill="#c8c8c8" d="M8 0a1.900 1.900 0 0 1 1.100 3.450V4.200h1.400a3.700 3.700 0 0 1 3.700 3.700v.600l1.300 1.900-1.300 1.900v.500a3.700 3.700 0 0 1-3.700 3.700h-5a3.700 3.700 0 0 1-3.700-3.700v-.500L.500 10.400l1.300-1.900v-.600a3.700 3.700 0 0 1 3.700-3.700h1.400v-.750A1.900 1.900 0 0 1 8 0z"/><rect x="5" y="7.500" width="2" height="5" rx="1" fill="#181818"/><rect x="9" y="7.500" width="2" height="5" rx="1" fill="#181818"/></svg>
  <div class="abs" style="left:517px;top:79.7px;height:20px;line-height:20px;font-size:13px;color:#cccccc;white-space:nowrap"><span class="fx" style="transform:scaleX(0.9553)">Cline</span></div>
  <svg style="left:497.5px;top:102.8px" width="16" height="17" viewBox="0 0 16 17"><path fill="#c8c8c8" d="M8 0a1.900 1.900 0 0 1 1.100 3.450V4.200h1.400a3.700 3.700 0 0 1 3.700 3.700v.600l1.300 1.900-1.300 1.900v.500a3.700 3.700 0 0 1-3.700 3.700h-5a3.700 3.700 0 0 1-3.700-3.700v-.500L.500 10.400l1.300-1.900v-.600a3.700 3.700 0 0 1 3.700-3.700h1.400v-.750A1.900 1.900 0 0 1 8 0z"/><rect x="5" y="7.500" width="2" height="5" rx="1" fill="#181818"/><rect x="9" y="7.500" width="2" height="5" rx="1" fill="#181818"/></svg>
  <div class="abs" style="left:517px;top:101.8px;height:20px;line-height:20px;font-size:13px;color:#cccccc;white-space:nowrap"><span class="fx" style="transform:scaleX(0.9553)">Cline</span></div>
</div>

<!-- ================= STATUS BAR ================= -->
<div id="status" class="abs">
  <!-- remote -->
  <svg style="left:11px;top:3px" width="14" height="14" viewBox="0 0 14 14" fill="none" stroke="#d0d0d0" stroke-width="1.200"><path d="M1.500 3.500l4.400 4.500-4.400 4.500M12.200.400 7.800 4.800l4.400 4.400"/></svg>
  <!-- git branch with + -->
  <svg style="left:43px;top:2px" width="17" height="18" viewBox="0 0 17 18" fill="none" stroke="#d0d0d0" stroke-width="1.150"><circle cx="3.200" cy="2.600" r="1.700"/><circle cx="3.200" cy="13.600" r="1.700"/><circle cx="10" cy="5.800" r="1.700"/><path d="M3.200 4.300v7.600M10 7.500c0 1.800-1.500 2.400-3 2.700"/><circle cx="10.400" cy="11.700" r="4.200" fill="#d0d0d0" stroke="none"/><path d="M10.400 9.300v4.800M8 11.700h4.800" stroke="#181818" stroke-width="1.100"/></svg>
  <div class="abs st" style="left:61.500px"><span class="fx" style="transform:scaleX(0.9991)">main+</span></div>
  <!-- cloud upload -->
  <svg style="left:101px;top:2.400px" width="18" height="16" viewBox="0 0 18 16" fill="none" stroke="#d0d0d0" stroke-width="1.150"><path d="M7 12H4.800A3.300 3.300 0 0 1 4.500 5.400 4.800 4.800 0 0 1 13.500 5"/><circle cx="12.500" cy="11" r="4.200" fill="#d0d0d0" stroke="none"/><path d="M12.500 13.500V8.800M10.500 10.700l2-2 2 2" stroke="#181818" stroke-width="1.100"/></svg>
  <!-- errors / warnings -->
  <svg style="left:134.500px;top:2px" width="15" height="15" viewBox="0 0 15 15" fill="none" stroke="#d0d0d0" stroke-width="1.150"><circle cx="7.500" cy="7.500" r="6.500"/><path d="M4.900 4.900l5.200 5.200M10.100 4.900l-5.200 5.200"/></svg>
  <div class="abs st" style="left:153.300px"><span class="fx" style="transform:scaleX(0.8972)">0</span></div>
  <svg style="left:163.500px;top:2px" width="15" height="15" viewBox="0 0 15 15" fill="none" stroke="#d0d0d0" stroke-width="1.150" stroke-linejoin="round"><path d="M7.500 1.300 14 13.300H1z"/><path d="M7.500 5.500v4.200M7.500 10.800v1.300"/></svg>
  <div class="abs st" style="left:182px"><span class="fx" style="transform:scaleX(0.8972)">0</span></div>
  <!-- debug -->
  <svg style="left:203px;top:1.500px" width="17" height="17" viewBox="0 0 17 17" fill="none" stroke="#d0d0d0" stroke-width="1.100" stroke-linejoin="round"><path d="M6 6V1.800l9.500 5.800-5.500 3.500"/><ellipse cx="5" cy="12" rx="2.300" ry="3"/><path d="M2.800 10.500h4.400M.800 12.300h1.900M7.300 12.300h1.900M1.300 9l1.500 1.300M8.700 9 7.200 10.300M1.300 15.600l1.600-1.300M8.700 15.600 7.100 14.300"/></svg>
  <!-- right side -->
  <div class="abs st" style="left:1424px"><span class="fx" style="transform:scaleX(0.9618)">Ln 97, Col 21 (300 selected)</span></div>
  <div class="abs st" style="left:1584.500px"><span class="fx" style="transform:scaleX(0.9293)">Spaces: 4</span></div>
  <div class="abs st" style="left:1650px"><span class="fx" style="transform:scaleX(0.9353)">UTF-8</span></div>
  <div class="abs st" style="left:1697.300px"><span class="fx" style="transform:scaleX(0.8423)">CRLF</span></div>
  <div class="abs st" style="left:1741.400px;top:.300px"><span class="fx" style="transform:scaleX(1.1444)">{ }</span></div>
  <div class="abs st" style="left:1761.700px"><span class="fx" style="transform:scaleX(0.9904)">Python</span></div>
  <!-- copilot -->
  <svg style="left:1815px;top:4px" width="17" height="14" viewBox="0 0 17 14"><path fill="#d0d0d0" d="M4.600 0C2.400 0 1.400 1.200 1.400 3.200c0 .800.100 1.400.400 1.900C.700 5.800 0 6.800 0 8v1.600C1.800 12.200 5 13.500 8.500 13.500S15.200 12.200 17 9.600V8c0-1.200-.700-2.200-1.800-2.900.300-.500.400-1.100.400-1.900C15.600 1.200 14.600 0 12.400 0c-1.800 0-3.200.600-3.900 1.600C7.800.600 6.400 0 4.600 0z"/><rect x="3.600" y="1.700" width="3.300" height="2.700" rx="1.200" fill="#181818"/><rect x="10.100" y="1.700" width="3.300" height="2.700" rx="1.200" fill="#181818"/><rect x="5.300" y="7.300" width="1.900" height="3.100" rx=".700" fill="#181818"/><rect x="9.800" y="7.300" width="1.900" height="3.100" rx=".700" fill="#181818"/></svg>
  <div class="abs st" style="left:1846.800px"><span class="fx" style="transform:scaleX(0.9468)">3.14.0</span></div>
  <!-- bell with dot -->
  <svg style="left:1894px;top:3px" width="16" height="16" viewBox="0 0 16 16" fill="none" stroke="#d0d0d0" stroke-width="1.150" stroke-linejoin="round"><path d="M8.500 2.200A4.300 4.300 0 0 0 3.700 6.500v3.300L2.300 12.300h11.400L12.300 9.800V8.500"/><path d="M6.300 12.500a1.700 1.700 0 0 0 3.400 0"/><circle cx="12.300" cy="3.800" r="3.200" fill="#d0d0d0" stroke="none"/></svg>
</div>

<!-- ================= PONG WINDOW ================= -->
<div id="pong" class="abs">
  <div id="pongtitle" class="abs"></div>
  <!-- app icon (abs 961..976 x 557..570) -->
  <div class="abs" style="left:8px;top:7px;width:15px;height:13px;background:#f4f4f4;border:1px solid #aeb4bc;border-radius:1px"></div>
  <div class="abs" style="left:10px;top:10px;width:5px;height:8px;background:linear-gradient(170deg,#3f82b5,#3f9f5f)"></div>
  <div class="abs" style="left:16.500px;top:10px;width:2.500px;height:8px;background:#e2e2e2"></div>
  <div class="abs" style="left:20px;top:10px;width:2px;height:4.500px;background:linear-gradient(180deg,#6a9fd0,#7fc77f)"></div>
  <div class="abs" style="left:29.200px;top:0;height:29px;line-height:30px;font-size:12px;color:#1a1a1a;white-space:nowrap"><span class="fx" style="transform:scaleX(0.9724)">Pong (ctypes)</span></div>
  <!-- window buttons -->
  <svg style="left:265px;top:9px" width="10" height="11" viewBox="0 0 10 11" fill="none" stroke="#111111" stroke-width="1"><path d="M0 5.500h10"/></svg>
  <svg style="left:310px;top:9px" width="10" height="10" viewBox="0 0 10 10" fill="none" stroke="#111111" stroke-width="1"><rect x=".500" y=".500" width="9" height="9" rx="1.300"/></svg>
  <svg style="left:356px;top:9px" width="10" height="10" viewBox="0 0 10 10" fill="none" stroke="#111111" stroke-width="1"><path d="M.200.200l9.600 9.600M9.800.200.200 9.800"/></svg>
  <!-- ball & paddle (abs ball 1141,771 20x20 ; paddle 1105,821 80x10) -->
  <div class="abs" style="left:188px;top:221px;width:20px;height:20px;background:#000000"></div>
  <div class="abs" style="left:152px;top:271px;width:80px;height:10px;background:#0000ff"></div>
</div>

</body>
</html>
